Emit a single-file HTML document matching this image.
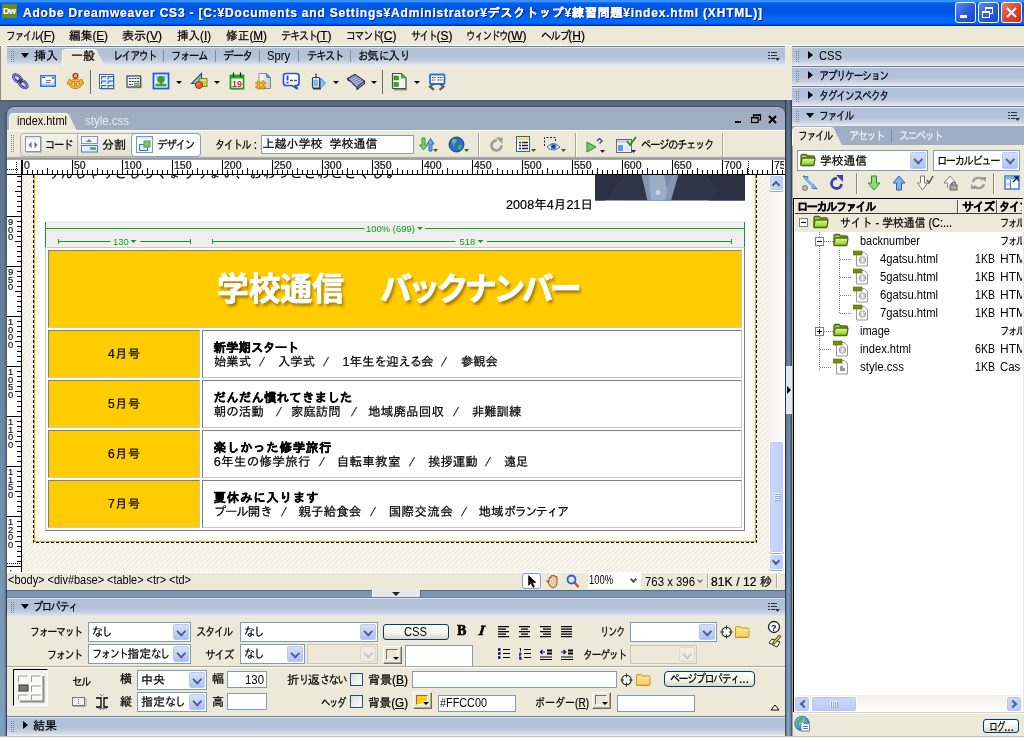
<!DOCTYPE html>
<html lang="ja"><head><meta charset="utf-8"><title>Adobe Dreamweaver CS3</title>
<style>
*{box-sizing:border-box;margin:0;padding:0}
html,body{width:1024px;height:738px;overflow:hidden;background:#ece9d8}
body{position:relative;will-change:transform;-webkit-text-stroke-width:0.22px;font-family:"Liberation Sans","IPAGothic",sans-serif;font-size:12px;color:#000;line-height:1}
.a{position:absolute}
.t{position:absolute;white-space:pre;line-height:14px;height:14px}
.k{letter-spacing:-3.5px}
.k3{letter-spacing:-3px}
.k2{letter-spacing:-2px}
.k1{letter-spacing:-1px}
u{text-decoration:underline}
#title{left:0;top:0;width:1024px;height:26px;background:linear-gradient(to bottom,#3a92ff 0,#3a92ff 1.800px,#0a6ef8 2.600px,#0059e3 4.500px,#0055e0 12px,#005aea 14px,#0064f6 17px,#0068fc 19px,#0068fa 23px,#0458e6 24px,#0034c4 25px,#002cb8 26px)}
#title .txt{left:23px;top:5px;color:#fff;font-weight:bold;font-size:13px;line-height:16px;height:16px;letter-spacing:0.25px;text-shadow:1px 1px 0 #0a1883}
.wb{position:absolute;top:2px;width:21px;height:21px;border:1px solid #fff;border-radius:3px;background:linear-gradient(135deg,#5b8df0 0%,#2a5ce0 50%,#1c45c8 100%)}
#menu{left:0;top:26px;width:1024px;height:19px;background:#ece9d8}
.ph{position:absolute;height:20px;background:linear-gradient(to bottom,#6f7f95 0,#6f7f95 1px,#dfe6ef 1px,#dfe6ef 2px,#b1c1d9 2px,#b2c2d9 11px,#c3cfe0 15px,#d3dce8 17.500px,#e2e8ef 19px,#eef1f5 20px)}
.ph .t{top:3px}
.grip{position:absolute;width:4px;height:12px;top:5px;background-image:radial-gradient(circle at 0.5px 0.5px,#75849a 0.65px,transparent 0.75px);background-size:2px 2px}
.tri-d{position:absolute;width:0;height:0;border-left:4.500px solid transparent;border-right:4.500px solid transparent;border-top:5.500px solid #000}
.tri-r{position:absolute;width:0;height:0;border-top:4.500px solid transparent;border-bottom:4.500px solid transparent;border-left:5.500px solid #000}
.pm{position:absolute;width:12px;height:9px}
.sep{position:absolute;width:1px;background:#8a8a8a}
.dd{position:absolute;width:0;height:0;border-left:3px solid transparent;border-right:3px solid transparent;border-top:3px solid #000}
.ic{position:absolute;width:16px;height:16px}
.sel{position:absolute;background:#fff;border:1px solid #7f9db9;height:20px}
.sel .btn{position:absolute;right:1px;top:1px;bottom:1px;width:16px;border-radius:2px;background:linear-gradient(to bottom,#d6e0fb,#b6c8f4 80%,#a9bdf0);border:1px solid #b9c9f0}
.sel .btn:after{content:"";position:absolute;left:3.500px;top:3px;width:4.500px;height:4.500px;border-right:2px solid #4d6185;border-bottom:2px solid #4d6185;transform:rotate(45deg)}
.sel.dis{background:#ece9d8;border-color:#c9c7ba}
.sel.dis .btn{background:#eeede5;border-color:#dcdacb}
.sel.dis .btn:after{border-color:#c9c7ba}
.sel .t{left:4px;top:2px}
.inp{position:absolute;background:#fff;border:1px solid #7f9db9}
.cb{position:absolute;width:13px;height:13px;border:1px solid #1c5180;background:linear-gradient(135deg,#dcdcd7,#fff)}
.btnx{position:absolute;border:1px solid #003c74;border-radius:3px;background:linear-gradient(to bottom,#fff,#f3f2ea 60%,#d9d6c8);text-align:center}
.sw{position:absolute;width:19px;height:18px;border:1px solid;border-color:#fff #716f64 #716f64 #fff;background:#ece9d8;box-shadow:inset -1px -1px 0 #aca899}
.sw i{position:absolute;left:2px;top:2px;right:3px;bottom:3px;border:1px solid;border-color:#716f64 #fff #fff #716f64;background:#ece9d8}
.sw b{position:absolute;right:2px;bottom:2px;width:7px;height:5px;background:#ece9d8}
.sw b:after{content:"";position:absolute;right:0;bottom:1px;border-left:3px solid transparent;border-right:3px solid transparent;border-top:3px solid #000}
</style></head><body>

<div id="title" class="a">
 <div class="a" style="left:2px;top:4px;width:15px;height:14px;background:#6b8b1c;color:#fff;font-size:9px;line-height:15px;font-weight:bold;letter-spacing:-0.5px;padding-left:1px">Dw</div>
<div class="t" style="left:23px;top:5px;font-weight:bold;color:#fff;line-height:16px;height:16px;letter-spacing:0.81px;text-shadow:1px 1px 0 #0a1883">Adobe Dreamweaver CS3 - [C:¥Documents and Settings¥Administrator¥デスクトップ¥練習問題¥index.html (XHTML)]</div>

 <div class="wb" style="left:955px"><div class="a" style="left:4px;top:12px;width:7px;height:3px;background:#fff"></div></div>
 <div class="wb" style="left:978px"><div class="a" style="left:6px;top:4px;width:8px;height:7px;border:1px solid #fff;border-top-width:2px"></div><div class="a" style="left:3px;top:8px;width:8px;height:7px;border:1px solid #fff;border-top-width:2px;background:#2d5fe0"></div></div>
 <div class="wb" style="left:1001px;background:linear-gradient(135deg,#e8826a 0%,#d9492a 50%,#c0341a 100%)"><svg class="a" style="left:3px;top:3px" width="13" height="13"><path d="M2 2L11 11M11 2L2 11" stroke="#fff" stroke-width="2.2" fill="none"/></svg></div>
</div>
<div id="menu" class="a">
<div class="t" style="left:6px;top:3px;"><span style="display:inline-block;width:33.67px;vertical-align:top"><span style="display:inline-block;transform:scaleX(0.821);transform-origin:0 50%;letter-spacing:-1.75px">ファイル</span></span>(<u>F</u>)</div>
<div class="t" style="left:69px;top:3px;transform:scaleX(0.9750);transform-origin:0 50%;">編集(<u>E</u>)</div>
<div class="t" style="left:122px;top:3px;letter-spacing:0.00px;">表示(<u>V</u>)</div>
<div class="t" style="left:177px;top:3px;transform:scaleX(0.9624);transform-origin:0 50%;">挿入(<u>I</u>)</div>
<div class="t" style="left:226px;top:3px;transform:scaleX(0.9762);transform-origin:0 50%;">修正(<u>M</u>)</div>
<div class="t" style="left:280.5px;top:3px;"><span style="display:inline-block;width:35.67px;vertical-align:top"><span style="display:inline-block;transform:scaleX(0.863);transform-origin:0 50%;letter-spacing:-1.67px">テキスト</span></span>(<u>T</u>)</div>
<div class="t" style="left:345.5px;top:3px;"><span style="display:inline-block;width:34.33px;vertical-align:top"><span style="display:inline-block;transform:scaleX(0.835);transform-origin:0 50%;letter-spacing:-1.72px">コマンド</span></span>(<u>C</u>)</div>
<div class="t" style="left:411px;top:3px;"><span style="display:inline-block;width:25.50px;vertical-align:top"><span style="display:inline-block;transform:scaleX(0.828);transform-origin:0 50%;letter-spacing:-1.74px">サイト</span></span>(<u>S</u>)</div>
<div class="t" style="left:466px;top:3px;"><span style="display:inline-block;width:41.17px;vertical-align:top"><span style="display:inline-block;transform:scaleX(0.806);transform-origin:0 50%;letter-spacing:-1.79px">ウィンドウ</span></span>(<u>W</u>)</div>
<div class="t" style="left:540.5px;top:3px;"><span style="display:inline-block;width:27.83px;vertical-align:top"><span style="display:inline-block;transform:scaleX(0.893);transform-origin:0 50%;letter-spacing:-1.61px">ヘルプ</span></span>(<u>H</u>)</div>
</div>
<div class="a" style="left:0;top:45px;width:1024px;height:1px;background:#fff"></div>
<div class="a" style="left:0;top:46px;width:1px;height:54px;background:#8d8d84"></div>

<div class="ph" style="left:7px;top:46px;width:778px"></div>
<div class="grip" style="left:11px;top:51px"></div>
<div class="tri-d" style="left:21px;top:53px"></div>
<div class="t" style="left:34px;top:49px">挿入</div>
<svg class="a" style="left:62px;top:48px" width="46" height="18"><path d="M0 18V5Q0 1 4 1H31Q34 1 35.5 4L43 18Z" fill="#ece9d8"/><path d="M0.5 18V5Q0.5 1.5 4 1.5H31Q34 1.5 35.5 4" fill="none" stroke="#f8f8f4" stroke-width="1"/></svg>
<div class="t" style="left:71px;top:49px">一般</div>
<div class="t" style="left:112.5px;top:49px;"><span style="display:inline-block;width:43.00px;vertical-align:top"><span style="display:inline-block;transform:scaleX(0.837);transform-origin:0 50%;letter-spacing:-1.72px">レイアウト</span></span></div>

<div class="sep" style="left:163px;top:50px;height:12px;background:#7d8ca3"></div>
<div class="t" style="left:171px;top:49px;"><span style="display:inline-block;width:36.00px;vertical-align:top"><span style="display:inline-block;transform:scaleX(0.870);transform-origin:0 50%;letter-spacing:-1.66px">フォーム</span></span></div>

<div class="sep" style="left:215px;top:50px;height:12px;background:#7d8ca3"></div>
<div class="t" style="left:223px;top:49px;"><span style="display:inline-block;width:29.00px;vertical-align:top"><span style="display:inline-block;transform:scaleX(0.926);transform-origin:0 50%;letter-spacing:-1.56px">データ</span></span></div>

<div class="sep" style="left:259px;top:50px;height:12px;background:#7d8ca3"></div>
<div class="t" style="left:267px;top:49px;-webkit-text-stroke-width:0;transform:scaleX(0.9316);transform-origin:0 50%;">Spry</div>

<div class="sep" style="left:298px;top:50px;height:12px;background:#7d8ca3"></div>
<div class="t" style="left:306.5px;top:49px;"><span style="display:inline-block;width:36.00px;vertical-align:top"><span style="display:inline-block;transform:scaleX(0.870);transform-origin:0 50%;letter-spacing:-1.66px">テキスト</span></span></div>

<div class="sep" style="left:350px;top:50px;height:12px;background:#7d8ca3"></div>
<div class="t" style="left:358px;top:49px;"><span style="display:inline-block;width:9.00px;vertical-align:top"><span style="display:inline-block;transform:scaleX(0.870);transform-origin:0 50%;letter-spacing:-1.66px">お</span></span>気<span style="display:inline-block;width:9.00px;vertical-align:top"><span style="display:inline-block;transform:scaleX(0.870);transform-origin:0 50%;letter-spacing:-1.66px">に</span></span>入<span style="display:inline-block;width:9.00px;vertical-align:top"><span style="display:inline-block;transform:scaleX(0.870);transform-origin:0 50%;letter-spacing:-1.66px">り</span></span></div>

<svg class="a" style="left:768px;top:51px" width="12" height="10"><path d="M0 1.5h2M3 1.5h6M0 4.5h2M3 4.5h6M0 7.5h2M3 7.5h4" stroke="#333" stroke-width="1"/><path d="M7 7h5l-2.5 3z" fill="#333"/></svg>
<!-- insert toolbar icons -->
<svg class="a" style="left:12px;top:73px" width="17" height="17" viewBox="0 0 17 17"><path d="M1 2L15.500 15" stroke="#c8ccf4" stroke-width="1.200"/><g fill="none"><ellipse cx="5.500" cy="5.500" rx="5" ry="2.800" transform="rotate(42 5.500 5.500)" stroke="#23237a" stroke-width="2.600"/><ellipse cx="5.500" cy="5.500" rx="5" ry="2.800" transform="rotate(42 5.500 5.500)" stroke="#8f93f2" stroke-width="1.200"/><ellipse cx="11" cy="11" rx="5" ry="2.800" transform="rotate(42 11 11)" stroke="#23237a" stroke-width="2.600"/><ellipse cx="11" cy="11" rx="5" ry="2.800" transform="rotate(42 11 11)" stroke="#8f93f2" stroke-width="1.200"/></g><rect x="6.500" y="6.500" width="3.500" height="3.500" fill="#444" transform="rotate(45 8.250 8.250)"/></svg>
<svg class="a" style="left:40px;top:75px" width="17" height="13"><defs><linearGradient id="gm" x1="0" y1="0" x2="0" y2="1"><stop offset="0" stop-color="#fff"/><stop offset=".5" stop-color="#f4f9ff"/><stop offset="1" stop-color="#a8ccf8"/></linearGradient></defs><rect x=".75" y=".75" width="14.500" height="10.500" fill="url(#gm)" stroke="#2a7ae8" stroke-width="1.500"/><path d="M6 5.500h5M6 7.500h4" stroke="#778" stroke-width="1"/><path d="M2 2.500h3" stroke="#446"/><rect x="12" y="2" width="2" height="2" fill="#f0582a"/></svg>
<svg class="a" style="left:67px;top:72px" width="18" height="18" viewBox="0 0 18 18"><g stroke="#b4680e" stroke-width="2.800" fill="none" stroke-linejoin="round"><path d="M8.500 6V15M5.500 8.500h6"/><path d="M2.500 10.500Q3.500 15.500 8.500 15.500Q13.500 15.500 14.500 10.500"/><path d="M1.500 11l1.200-2.500 2 2.200zM15.500 11l-1.200-2.500-2 2.200z"/></g><g stroke="#f4bc1e" stroke-width="1.400" fill="none"><path d="M8.500 6V15M5.500 8.500h6"/><path d="M2.500 10.500Q3.500 15.500 8.500 15.500Q13.500 15.500 14.500 10.500"/><path d="M1.500 11l1.200-2.500 2 2.200zM15.500 11l-1.200-2.500-2 2.200z" fill="#f4bc1e"/></g><circle cx="8.500" cy="3.800" r="2.300" fill="#fff" stroke="#a8401a" stroke-width="1.600"/><circle cx="8.500" cy="3.800" r=".9" fill="#d86a2a"/></svg>
<div class="sep" style="left:90px;top:70px;height:24px;background:#6e6e66"></div>
<svg class="a" style="left:98px;top:73px" width="18" height="18"><rect x="3" y="3" width="14" height="14" fill="#a9acb4" opacity=".6"/><rect x="1.500" y="1.500" width="14" height="14" fill="#fff" stroke="#3a64ae" stroke-width="1"/><g fill="#c4d8f4"><rect x="3" y="3" width="5" height="3"/><rect x="9.500" y="3" width="5" height="3"/><rect x="3" y="7.500" width="5" height="3"/><rect x="9.500" y="7.500" width="5" height="3"/><rect x="3" y="12" width="5" height="2.500"/><rect x="9.500" y="12" width="5" height="2.500"/></g><path d="M3.500 6.500v-3h5M10 6.500v-3h5M3.500 11v-3h5M10 11v-3h5M3.500 15v-2.500h5M10 15v-2.500h5" fill="none" stroke="#2f5cb4" stroke-width="1"/></svg>
<svg class="a" style="left:126px;top:75px" width="17" height="14"><rect x="2" y="2" width="14" height="11.500" fill="#9a9a9a" opacity=".5"/><rect x="1" y="1" width="13.500" height="11" fill="#eef4fc" stroke="#4a4e58" stroke-width="1.300"/><path d="M3 3.500h10M3 6.500h10M3 9.500h4" stroke="#27348c" stroke-width="1.200" stroke-dasharray="2 .7"/><rect x="8.500" y="8" width="4.500" height="3" fill="#8ec43a" stroke="#5f8f1a" stroke-width=".5"/></svg>
<svg class="a" style="left:152px;top:72px" width="18" height="18"><defs><linearGradient id="gs" x1="0" y1="0" x2="0" y2="1"><stop offset="0" stop-color="#9cc8f6"/><stop offset=".7" stop-color="#fff"/></linearGradient></defs><rect x="1.500" y="1.500" width="15" height="15" fill="#fff" stroke="#1a5ae8" stroke-width="1.800"/><rect x="3.500" y="3.500" width="11" height="11" fill="url(#gs)"/><rect x="3.500" y="11.500" width="11" height="3" fill="#3aaa34"/><ellipse cx="9" cy="7.500" rx="3.800" ry="3.400" fill="#3d9c35"/><rect x="8.500" y="10" width="1.200" height="2.500" fill="#a0333a"/></svg>
<div class="dd" style="left:176px;top:81px"></div>
<svg class="a" style="left:190px;top:72px" width="19" height="18"><path d="M1.500 11.500L11.500 1.500V11.500Z" fill="#86d4c0" stroke="#2a5090" stroke-width="1.200"/><rect x="9" y="6.500" width="8" height="8" fill="#c9d23e" stroke="#7a8a20"/><rect x="10" y="7.500" width="6" height="1.500" fill="#e4ea8a"/><circle cx="9" cy="13" r="3.600" fill="#e4573a" stroke="#a8341c"/><circle cx="8.300" cy="12.300" r="1.400" fill="#f08a70"/></svg>
<div class="dd" style="left:214px;top:81px"></div>
<svg class="a" style="left:229px;top:72px" width="17" height="18"><rect x="1.500" y="3.500" width="13" height="13" fill="#fff" stroke="#18a818" stroke-width="1.800"/><rect x="1" y="3" width="14" height="3.500" fill="#18a818"/><rect x="3" y="17" width="12" height="1" fill="#9a9a9a"/><path d="M4.500 .5v4.500M11.500 .5v4.500" stroke="#222" stroke-width="1.300"/><text x="3" y="15" font-family="Liberation Sans,sans-serif" font-size="9.500" font-weight="bold" fill="#d81838" textLength="10" lengthAdjust="spacingAndGlyphs">19</text></svg>
<svg class="a" style="left:255px;top:72px" width="18" height="19"><defs><linearGradient id="gp" x1="0" y1="0" x2="1" y2="0"><stop offset="0" stop-color="#fff"/><stop offset="1" stop-color="#c8c8cc"/></linearGradient></defs><path d="M4 1.500h7.500l4 4v11h-11.500z" fill="url(#gp)" stroke="#8a8a92"/><path d="M11.500 1.500v4h4z" fill="#5a9af0" stroke="#3a6ac8" stroke-width=".6"/><path d="M3.500 8.500v9M8 8.500v9M.5 11h10.500M.5 15h10.500" stroke="#c47a0e" stroke-width="2.400"/><path d="M3.500 8.500v9M8 8.500v9M.5 11h10.500M.5 15h10.500" stroke="#f4b428" stroke-width="1.200"/></svg>
<svg class="a" style="left:282px;top:72px" width="19" height="18"><path d="M4 1.500h10.500q2.500 0 2.500 2.500v7q0 2.500-2.500 2.500h-1l2 3.500-5.500-3.500h-6q-2.500 0-2.500-2.500v-7q0-2.500 2.500-2.500z" fill="#fff" stroke="#2a52c8" stroke-width="1.700"/><path d="M5.500 3.500v5M5.500 9.800v1.700" stroke="#2a52c8" stroke-width="2"/><path d="M8 8.500h3M12 8.500h3" stroke="#2a52c8" stroke-width="1.600"/></svg>
<svg class="a" style="left:311px;top:73px" width="16" height="17"><rect x="2" y="15" width="8" height="1.500" fill="#333"/><rect x="1.500" y="4.500" width="7" height="10.500" rx="1" fill="#f4f8fc" stroke="#3a3e48" stroke-width="1.200"/><rect x="3" y="7" width="3.500" height="6" fill="#7cc4f4" stroke="#4a8ad0" stroke-width=".5"/><path d="M5 .5v5" stroke="#333" stroke-width="1.200"/><path d="M9.500 5l5 5-5 5z" fill="#86c0f2" stroke="#3a78c8" stroke-width=".9"/></svg>
<div class="dd" style="left:333px;top:81px"></div>
<svg class="a" style="left:346px;top:73px" width="20" height="17"><path d="M1.500 5.500L9 1.500L18.500 8L11 14.500Z" fill="#b4b8e4" stroke="#2a2e48" stroke-width="1.100"/><path d="M4 6l7-3.500M5.800 7.500l7-3.500M7.600 9l7-3.500M9.400 10.500l7-3.500M11 12l6-3" stroke="#6a70b0" stroke-width=".9"/><path d="M1.500 5.500q.5 3 2.500 2M18.500 8v2.500l-7.500 6v-2" fill="none" stroke="#2a2e48" stroke-width="1.100"/></svg>
<div class="dd" style="left:371px;top:81px"></div>
<div class="sep" style="left:382px;top:70px;height:24px;background:#6e6e66"></div>
<svg class="a" style="left:391px;top:72px" width="17" height="19"><rect x="3" y="17" width="13" height="1.500" fill="#8a8a8a"/><path d="M1.500 1.500h9l4.500 4.500v10.500h-13.500z" fill="#f4f4f0" stroke="#4a4a4a" stroke-width="1.200"/><path d="M10.500 1.500v4.500h4.500z" fill="#4ab83e" stroke="#2d8a2a" stroke-width=".7"/><rect x="3" y="4" width="4.500" height="4" fill="#2fa52a" stroke="#1a7a1a" stroke-width=".5"/><rect x="3" y="10.500" width="4.500" height="4" fill="#2fa52a" stroke="#1a7a1a" stroke-width=".5"/></svg>
<div class="dd" style="left:414px;top:81px"></div>
<svg class="a" style="left:428px;top:73px" width="18" height="18"><rect x="2" y="1.500" width="14.500" height="9.500" rx="1" fill="#f6faff" stroke="#2a6af0" stroke-width="1.800"/><path d="M4 4.500h4M9.500 4.500h5M9.500 7h5M4 7h3" stroke="#444" stroke-width="1" stroke-dasharray="1.500 .5"/><path d="M6 10.500l-4 3.200 4 3.200M11.500 10.500l4 3.200-4 3.200" fill="none" stroke="#585c64" stroke-width="2.200"/></svg>
<div class="a" style="left:0;top:100px;width:793px;height:638px;background:linear-gradient(to bottom,#5a6f87,#81a1c0)"></div><div class="a" style="left:0;top:112px;width:7px;height:626px;background:linear-gradient(to right,rgba(0,0,0,0) 0,rgba(0,0,0,0) 3.500px,rgba(20,30,45,.28) 6px,rgba(20,30,45,.7) 6.200px,rgba(20,30,45,.7) 7px)"></div><div class="a" style="left:0;top:100px;width:786px;height:1.500px;background:#4f6278"></div><div class="a" style="left:7px;top:590px;width:779px;height:1px;background:rgba(20,30,50,.35)"></div><div class="a" style="left:6px;top:106px;width:780px;height:484px;background:#9eadc2;border-radius:8px 8px 0 0;border:1px solid #3a4855;border-bottom:none;border-left-color:#4c5f75;border-right-color:#4c5f75"></div><div class="a" style="left:13px;top:107px;width:766px;height:1px;background:#aab7c9"></div><svg class="a" style="left:9px;top:112px" width="72" height="19"><path d="M0 19V6Q0 1 5 1H56Q59 1 60.5 4L68 19Z" fill="#ece9d8"/><path d="M0.5 19V6Q0.5 1.5 5 1.500H56Q59 1.500 60.500 4" fill="none" stroke="#fbfbf8"/></svg><div class="t" style="left:17px;top:114px;-webkit-text-stroke-width:0;transform:scaleX(0.9140);transform-origin:0 50%;">index.html</div>
<div class="t" style="left:85px;top:114px;color:#e6ebf2;-webkit-text-stroke-width:0;transform:scaleX(0.9562);transform-origin:0 50%;">style.css</div>
<div class="a" style="left:735px;top:121px;width:6px;height:2px;background:#000"></div><svg class="a" style="left:751px;top:114px" width="11" height="10"><path d="M2.5 3V1h7v5h-2" fill="none" stroke="#000" stroke-width="1.200"/><rect x=".5" y="3.500" width="6.500" height="5" fill="none" stroke="#000" stroke-width="1.200"/><path d="M2 1.200h8M0 3.800h7.500" stroke="#000" stroke-width="1.500"/></svg><svg class="a" style="left:768px;top:114.500px" width="10" height="9"><path d="M1 1l7 7M8 1l-7 7" stroke="#000" stroke-width="2"/></svg><div class="a" style="left:7px;top:130px;width:778px;height:29px;background:linear-gradient(to bottom,#fbfbf8 0,#fbfbf8 1px,#ece9d8 1px,#ece9d8 26px,#c9c6b6 27px,#a6a393 28px,#8f8c7e 29px)"></div><div class="grip" style="left:11px;top:135px;height:18px"></div><div class="a" style="left:20px;top:133px;width:181px;height:24px;border:1px solid #b5b2a2;border-radius:4px;background:linear-gradient(to bottom,#f4f3ec,#e4e1d2)"></div><div class="a" style="left:77px;top:134px;width:1px;height:22px;background:#b5b2a2"></div><div class="a" style="left:131px;top:133px;width:70px;height:24px;border:1px solid #7d9fd0;border-radius:4px;background:#fff"></div><svg class="a" style="left:25px;top:136px" width="17" height="17"><rect x=".5" y=".5" width="15" height="15" fill="#fcfcfc" stroke="#8894a8"/><rect x="1" y="1" width="14" height="2" fill="#e3e7ee"/><path d="M6.500 5.500l-3 3.500 3 3.500zM9.500 5.500l3 3.500-3 3.500z" fill="#5f6f88"/><path d="M1 16.500h15.500V1" stroke="#b8bcc4" fill="none"/></svg><div class="t" style="left:45px;top:138px;"><span style="display:inline-block;width:27.00px;vertical-align:top"><span style="display:inline-block;transform:scaleX(0.870);transform-origin:0 50%;letter-spacing:-1.66px">コード</span></span></div>
<svg class="a" style="left:81px;top:136px" width="18" height="17"><rect x=".5" y=".5" width="16" height="7" fill="#f4f4f4" stroke="#8894a8"/><path d="M5 6l3-3 3 3z" fill="#6f7d92"/><rect x=".5" y="9.500" width="16" height="6.500" fill="#e6f0fb" stroke="#3d7bd6"/><rect x="9" y="11" width="6" height="3" fill="#5cb85c"/></svg><div class="t" style="left:102px;top:138px;letter-spacing:0.00px;">分割</div>
<svg class="a" style="left:136px;top:136px" width="18" height="18"><rect x=".5" y=".5" width="16" height="16" fill="#fdfdfd" stroke="#6f9ad8"/><rect x="1" y="1" width="15" height="2" fill="#dfe8f6"/><rect x="3.500" y="8.500" width="8" height="6" fill="#dbe8fa" stroke="#3d7bd6"/><rect x="8" y="5" width="6" height="6" fill="#86c866" stroke="#4c9a3c"/></svg><div class="t" style="left:157px;top:138px;"><span style="display:inline-block;width:37.00px;vertical-align:top"><span style="display:inline-block;transform:scaleX(0.891);transform-origin:0 50%;letter-spacing:-1.62px">デザイン</span></span></div>
<div class="t" style="left:215px;top:138px;"><span style="display:inline-block;width:35.33px;vertical-align:top"><span style="display:inline-block;transform:scaleX(0.856);transform-origin:0 50%;letter-spacing:-1.68px">タイトル</span></span> :</div>
<div class="inp" style="left:261px;top:135px;width:153px;height:18.500px"></div><div class="t" style="left:262.5px;top:136.5px;letter-spacing:0.03px;">上越小学校  学校通信</div>
<svg class="a" style="left:419px;top:137px" width="20" height="16"><path d="M3 1h3v7h2.500l-4 5-4-5H3z" fill="#7bd26a" stroke="#2d8a2a" stroke-width=".9"/><path d="M10 14V7H8l3.500-5.500L15 7h-2v7z" fill="#6aa6ea" stroke="#2d5fb0" stroke-width=".9"/><path d="M14 12h5l-2.500 3z" fill="#3c5a1c"/></svg><svg class="a" style="left:448px;top:136px" width="22" height="18"><circle cx="8.500" cy="8.500" r="7.500" fill="#2c68d8" stroke="#1c3f8f"/><path d="M4 4q3-2 5 0 1 2-1 3-2 1-2 3-3-1-2-6zM10 9q3-1 4 1-1 4-3 4-2-2-1-5z" fill="#4cae3c"/><circle cx="6" cy="5" r="2" fill="#8fb6f2" opacity=".6"/><path d="M16 13h5l-2.500 3z" fill="#3c5a1c"/></svg><div class="a" style="left:478px;top:133px;width:2px;height:24px;background:linear-gradient(to right,#a6a393 50%,#fbfbf8 50%)"></div><svg class="a" style="left:489px;top:137px" width="16" height="16"><path d="M12.500 8.500A5 5 0 1 1 8 3.500" fill="none" stroke="#9a9a9a" stroke-width="2.600"/><path d="M7 0.500h6.500V7z" fill="#9a9a9a"/></svg><svg class="a" style="left:516px;top:136px" width="20" height="18"><rect x=".5" y=".5" width="13" height="15" fill="#fffef0" stroke="#2f6f7f"/><rect x="1" y="1" width="12" height="3" fill="#f0e08a"/><path d="M3 6.500h2M6 6.500h6M3 9.500h2M6 9.500h6M3 12.500h2M6 12.500h6" stroke="#223" stroke-width="1.300"/><path d="M15 13h5l-2.500 3z" fill="#3c5a1c"/></svg><svg class="a" style="left:543px;top:136px" width="24" height="18"><path d="M1.500 10V1.500h11V5" fill="none" stroke="#223" stroke-dasharray="2 1.500"/><path d="M4 11q6-7 13 0-7 6-13 0z" fill="#f4f8ff" stroke="#667"/><circle cx="10.500" cy="10.500" r="3" fill="#3d7be0"/><circle cx="10.500" cy="10.500" r="1.200" fill="#123"/><path d="M18 13h5l-2.500 3z" fill="#3c5a1c"/></svg><div class="a" style="left:575px;top:133px;width:2px;height:24px;background:linear-gradient(to right,#a6a393 50%,#fbfbf8 50%)"></div><svg class="a" style="left:586px;top:137px" width="22" height="18"><path d="M1 5l9 5-9 5z" fill="#6fc96a" stroke="#2d8a2a"/><path d="M11 4l2.500-2.500M13.500 6.500L16 4l-2.500-2.500" stroke="#445a88" stroke-width="1.500" fill="none"/><path d="M14 13h5l-2.500 3z" fill="#223"/></svg><svg class="a" style="left:616px;top:136px" width="22" height="19"><rect x=".5" y="3.500" width="15" height="13" fill="#eef3fa" stroke="#667"/><rect x="1" y="4" width="14" height="3" fill="#c9d3e3"/><rect x="2" y="9" width="5" height="6" fill="#5c9be8"/><rect x="8" y="9" width="6" height="6" fill="#dfe6f2"/><path d="M11 5l3 4 6-8" fill="none" stroke="#2d8a2a" stroke-width="1.800"/><path d="M15 14h5l-2.500 3z" fill="#223"/></svg><div class="t" style="left:641px;top:138px;"><span style="display:inline-block;width:72.00px;vertical-align:top"><span style="display:inline-block;transform:scaleX(0.870);transform-origin:0 50%;letter-spacing:-1.66px">ページのチェック</span></span></div>
<div class="a" style="left:722px;top:133px;width:2px;height:24px;background:linear-gradient(to right,#a6a393 50%,#fbfbf8 50%)"></div><div class="a" style="left:7px;top:160px;width:778px;height:15px;background:#fff"></div><div class="a" style="left:7px;top:174px;width:778px;height:1px;background:#000"></div><svg class="a" style="left:7px;top:160px" width="778" height="15"><path d="M15.5 15v-15M20.5 15v-5M25.5 15v-5M30.5 15v-5M35.5 15v-5M40.5 15v-7M45.5 15v-5M50.5 15v-5M55.5 15v-5M60.5 15v-5M65.5 15v-15M70.5 15v-5M75.5 15v-5M80.5 15v-5M85.5 15v-5M90.5 15v-7M95.5 15v-5M100.5 15v-5M105.5 15v-5M110.5 15v-5M115.5 15v-15M120.5 15v-5M125.5 15v-5M130.5 15v-5M135.5 15v-5M140.5 15v-7M145.5 15v-5M150.5 15v-5M155.5 15v-5M160.5 15v-5M165.5 15v-15M170.5 15v-5M175.5 15v-5M180.5 15v-5M185.5 15v-5M190.5 15v-7M195.5 15v-5M200.5 15v-5M205.5 15v-5M210.5 15v-5M215.5 15v-15M220.5 15v-5M225.5 15v-5M230.5 15v-5M235.5 15v-5M240.5 15v-7M245.5 15v-5M250.5 15v-5M255.5 15v-5M260.5 15v-5M265.5 15v-15M270.5 15v-5M275.5 15v-5M280.5 15v-5M285.5 15v-5M290.5 15v-7M295.5 15v-5M300.5 15v-5M305.5 15v-5M310.5 15v-5M315.5 15v-15M320.5 15v-5M325.5 15v-5M330.5 15v-5M335.5 15v-5M340.5 15v-7M345.5 15v-5M350.5 15v-5M355.5 15v-5M360.5 15v-5M365.5 15v-15M370.5 15v-5M375.5 15v-5M380.5 15v-5M385.5 15v-5M390.5 15v-7M395.5 15v-5M400.5 15v-5M405.5 15v-5M410.5 15v-5M415.5 15v-15M420.5 15v-5M425.5 15v-5M430.5 15v-5M435.5 15v-5M440.5 15v-7M445.5 15v-5M450.5 15v-5M455.5 15v-5M460.5 15v-5M465.5 15v-15M470.5 15v-5M475.5 15v-5M480.5 15v-5M485.5 15v-5M490.5 15v-7M495.5 15v-5M500.5 15v-5M505.5 15v-5M510.5 15v-5M515.5 15v-15M520.5 15v-5M525.5 15v-5M530.5 15v-5M535.5 15v-5M540.5 15v-7M545.5 15v-5M550.5 15v-5M555.5 15v-5M560.5 15v-5M565.5 15v-15M570.5 15v-5M575.5 15v-5M580.5 15v-5M585.5 15v-5M590.5 15v-7M595.5 15v-5M600.5 15v-5M605.5 15v-5M610.5 15v-5M615.5 15v-15M620.5 15v-5M625.5 15v-5M630.5 15v-5M635.5 15v-5M640.5 15v-7M645.5 15v-5M650.5 15v-5M655.5 15v-5M660.5 15v-5M665.5 15v-15M670.5 15v-5M675.5 15v-5M680.5 15v-5M685.5 15v-5M690.5 15v-7M695.5 15v-5M700.5 15v-5M705.5 15v-5M710.5 15v-5M715.5 15v-15M720.5 15v-5M725.5 15v-5M730.5 15v-5M735.5 15v-5M740.5 15v-7M745.5 15v-5M750.5 15v-5M755.5 15v-5M760.5 15v-5M765.5 15v-15M770.5 15v-5M775.5 15v-5" stroke="#000" stroke-width="1" fill="none"/><rect x="14" y="0" width="1.500" height="15" fill="#000"/><path d="M0 9.500h12M9.500 2v12M741.500 1v13" stroke="#000" stroke-dasharray="1 1" fill="none"/></svg><div class="t" style="left:24px;top:160px;font-size:10.500px;line-height:11px;height:11px;font-family:'Liberation Sans',sans-serif;color:#111;overflow:hidden;max-width:760px">0</div><div class="t" style="left:74px;top:160px;font-size:10.500px;line-height:11px;height:11px;font-family:'Liberation Sans',sans-serif;color:#111;overflow:hidden;max-width:710px">50</div><div class="t" style="left:124px;top:160px;font-size:10.500px;line-height:11px;height:11px;font-family:'Liberation Sans',sans-serif;color:#111;overflow:hidden;max-width:660px">100</div><div class="t" style="left:174px;top:160px;font-size:10.500px;line-height:11px;height:11px;font-family:'Liberation Sans',sans-serif;color:#111;overflow:hidden;max-width:610px">150</div><div class="t" style="left:224px;top:160px;font-size:10.500px;line-height:11px;height:11px;font-family:'Liberation Sans',sans-serif;color:#111;overflow:hidden;max-width:560px">200</div><div class="t" style="left:274px;top:160px;font-size:10.500px;line-height:11px;height:11px;font-family:'Liberation Sans',sans-serif;color:#111;overflow:hidden;max-width:510px">250</div><div class="t" style="left:324px;top:160px;font-size:10.500px;line-height:11px;height:11px;font-family:'Liberation Sans',sans-serif;color:#111;overflow:hidden;max-width:460px">300</div><div class="t" style="left:374px;top:160px;font-size:10.500px;line-height:11px;height:11px;font-family:'Liberation Sans',sans-serif;color:#111;overflow:hidden;max-width:410px">350</div><div class="t" style="left:424px;top:160px;font-size:10.500px;line-height:11px;height:11px;font-family:'Liberation Sans',sans-serif;color:#111;overflow:hidden;max-width:360px">400</div><div class="t" style="left:474px;top:160px;font-size:10.500px;line-height:11px;height:11px;font-family:'Liberation Sans',sans-serif;color:#111;overflow:hidden;max-width:310px">450</div><div class="t" style="left:524px;top:160px;font-size:10.500px;line-height:11px;height:11px;font-family:'Liberation Sans',sans-serif;color:#111;overflow:hidden;max-width:260px">500</div><div class="t" style="left:574px;top:160px;font-size:10.500px;line-height:11px;height:11px;font-family:'Liberation Sans',sans-serif;color:#111;overflow:hidden;max-width:210px">550</div><div class="t" style="left:624px;top:160px;font-size:10.500px;line-height:11px;height:11px;font-family:'Liberation Sans',sans-serif;color:#111;overflow:hidden;max-width:160px">600</div><div class="t" style="left:674px;top:160px;font-size:10.500px;line-height:11px;height:11px;font-family:'Liberation Sans',sans-serif;color:#111;overflow:hidden;max-width:110px">650</div><div class="t" style="left:724px;top:160px;font-size:10.500px;line-height:11px;height:11px;font-family:'Liberation Sans',sans-serif;color:#111;overflow:hidden;max-width:60px">700</div><div class="t" style="left:774px;top:160px;font-size:10.500px;line-height:11px;height:11px;font-family:'Liberation Sans',sans-serif;color:#111;overflow:hidden;max-width:10px">750</div><div class="a" style="left:7px;top:175px;width:14px;height:397px;background:#fff"></div><div class="a" style="left:21px;top:175px;width:1.500px;height:397px;background:#000"></div><svg class="a" style="left:7px;top:175px" width="15" height="397"><path d="M15 1.5h-5M15 6.5h-5M15 11.5h-5M15 16.5h-7M15 21.5h-5M15 26.5h-5M15 31.5h-5M15 36.5h-5M15 41.5h-15M15 46.5h-5M15 51.5h-5M15 56.5h-5M15 61.5h-5M15 66.5h-7M15 71.5h-5M15 76.5h-5M15 81.5h-5M15 86.5h-5M15 91.5h-15M15 96.5h-5M15 101.5h-5M15 106.5h-5M15 111.5h-5M15 116.5h-7M15 121.5h-5M15 126.5h-5M15 131.5h-5M15 136.5h-5M15 141.5h-15M15 146.5h-5M15 151.5h-5M15 156.5h-5M15 161.5h-5M15 166.5h-7M15 171.5h-5M15 176.5h-5M15 181.5h-5M15 186.5h-5M15 191.5h-15M15 196.5h-5M15 201.5h-5M15 206.5h-5M15 211.5h-5M15 216.5h-7M15 221.5h-5M15 226.5h-5M15 231.5h-5M15 236.5h-5M15 241.5h-15M15 246.5h-5M15 251.5h-5M15 256.5h-5M15 261.5h-5M15 266.5h-7M15 271.5h-5M15 276.5h-5M15 281.5h-5M15 286.5h-5M15 291.5h-15M15 296.5h-5M15 301.5h-5M15 306.5h-5M15 311.5h-5M15 316.5h-7M15 321.5h-5M15 326.5h-5M15 331.5h-5M15 336.5h-5M15 341.5h-15M15 346.5h-5M15 351.5h-5M15 356.5h-5M15 361.5h-5M15 366.5h-7M15 371.5h-5M15 376.5h-5M15 381.5h-5M15 386.5h-5" stroke="#000" stroke-width="1" fill="none"/><path d="M0 388.500h14" stroke="#000" stroke-dasharray="1 1"/><rect x="0" y="391" width="15" height="1" fill="#000"/><rect x="3" y="395" width="1.500" height="1.500" fill="#c8402a"/></svg><div class="t" style="left:8px;top:218.0px;font-size:11px;line-height:9px;height:9px;font-family:'Liberation Sans',sans-serif;color:#111;transform:scale(.85,.9);transform-origin:0 0">9</div><div class="t" style="left:8px;top:225.6px;font-size:11px;line-height:9px;height:9px;font-family:'Liberation Sans',sans-serif;color:#111;transform:scale(.85,.9);transform-origin:0 0">0</div><div class="t" style="left:8px;top:233.2px;font-size:11px;line-height:9px;height:9px;font-family:'Liberation Sans',sans-serif;color:#111;transform:scale(.85,.9);transform-origin:0 0">0</div><div class="t" style="left:8px;top:268.0px;font-size:11px;line-height:9px;height:9px;font-family:'Liberation Sans',sans-serif;color:#111;transform:scale(.85,.9);transform-origin:0 0">9</div><div class="t" style="left:8px;top:275.6px;font-size:11px;line-height:9px;height:9px;font-family:'Liberation Sans',sans-serif;color:#111;transform:scale(.85,.9);transform-origin:0 0">5</div><div class="t" style="left:8px;top:283.2px;font-size:11px;line-height:9px;height:9px;font-family:'Liberation Sans',sans-serif;color:#111;transform:scale(.85,.9);transform-origin:0 0">0</div><div class="t" style="left:8px;top:318.0px;font-size:11px;line-height:9px;height:9px;font-family:'Liberation Sans',sans-serif;color:#111;transform:scale(.85,.9);transform-origin:0 0">1</div><div class="t" style="left:8px;top:325.6px;font-size:11px;line-height:9px;height:9px;font-family:'Liberation Sans',sans-serif;color:#111;transform:scale(.85,.9);transform-origin:0 0">0</div><div class="t" style="left:8px;top:333.2px;font-size:11px;line-height:9px;height:9px;font-family:'Liberation Sans',sans-serif;color:#111;transform:scale(.85,.9);transform-origin:0 0">0</div><div class="t" style="left:8px;top:340.8px;font-size:11px;line-height:9px;height:9px;font-family:'Liberation Sans',sans-serif;color:#111;transform:scale(.85,.9);transform-origin:0 0">0</div><div class="t" style="left:8px;top:368.0px;font-size:11px;line-height:9px;height:9px;font-family:'Liberation Sans',sans-serif;color:#111;transform:scale(.85,.9);transform-origin:0 0">1</div><div class="t" style="left:8px;top:375.6px;font-size:11px;line-height:9px;height:9px;font-family:'Liberation Sans',sans-serif;color:#111;transform:scale(.85,.9);transform-origin:0 0">0</div><div class="t" style="left:8px;top:383.2px;font-size:11px;line-height:9px;height:9px;font-family:'Liberation Sans',sans-serif;color:#111;transform:scale(.85,.9);transform-origin:0 0">5</div><div class="t" style="left:8px;top:390.8px;font-size:11px;line-height:9px;height:9px;font-family:'Liberation Sans',sans-serif;color:#111;transform:scale(.85,.9);transform-origin:0 0">0</div><div class="t" style="left:8px;top:418.0px;font-size:11px;line-height:9px;height:9px;font-family:'Liberation Sans',sans-serif;color:#111;transform:scale(.85,.9);transform-origin:0 0">1</div><div class="t" style="left:8px;top:425.6px;font-size:11px;line-height:9px;height:9px;font-family:'Liberation Sans',sans-serif;color:#111;transform:scale(.85,.9);transform-origin:0 0">1</div><div class="t" style="left:8px;top:433.2px;font-size:11px;line-height:9px;height:9px;font-family:'Liberation Sans',sans-serif;color:#111;transform:scale(.85,.9);transform-origin:0 0">0</div><div class="t" style="left:8px;top:440.8px;font-size:11px;line-height:9px;height:9px;font-family:'Liberation Sans',sans-serif;color:#111;transform:scale(.85,.9);transform-origin:0 0">0</div><div class="t" style="left:8px;top:468.0px;font-size:11px;line-height:9px;height:9px;font-family:'Liberation Sans',sans-serif;color:#111;transform:scale(.85,.9);transform-origin:0 0">1</div><div class="t" style="left:8px;top:475.6px;font-size:11px;line-height:9px;height:9px;font-family:'Liberation Sans',sans-serif;color:#111;transform:scale(.85,.9);transform-origin:0 0">1</div><div class="t" style="left:8px;top:483.2px;font-size:11px;line-height:9px;height:9px;font-family:'Liberation Sans',sans-serif;color:#111;transform:scale(.85,.9);transform-origin:0 0">5</div><div class="t" style="left:8px;top:490.8px;font-size:11px;line-height:9px;height:9px;font-family:'Liberation Sans',sans-serif;color:#111;transform:scale(.85,.9);transform-origin:0 0">0</div><div class="t" style="left:8px;top:518.0px;font-size:11px;line-height:9px;height:9px;font-family:'Liberation Sans',sans-serif;color:#111;transform:scale(.85,.9);transform-origin:0 0">1</div><div class="t" style="left:8px;top:525.6px;font-size:11px;line-height:9px;height:9px;font-family:'Liberation Sans',sans-serif;color:#111;transform:scale(.85,.9);transform-origin:0 0">2</div><div class="t" style="left:8px;top:533.2px;font-size:11px;line-height:9px;height:9px;font-family:'Liberation Sans',sans-serif;color:#111;transform:scale(.85,.9);transform-origin:0 0">0</div><div class="t" style="left:8px;top:540.8px;font-size:11px;line-height:9px;height:9px;font-family:'Liberation Sans',sans-serif;color:#111;transform:scale(.85,.9);transform-origin:0 0">0</div><div class="a" style="left:22px;top:175px;width:746px;height:397px;overflow:hidden;background:#f2f1e3"><div class="a" style="left:0;top:0;width:747px;height:397px;background:repeating-linear-gradient(135deg,#f2f1e3 0,#f2f1e3 2.650px,#fff 2.850px,#fff 3.350px,#f2f1e3 3.5355px)"></div><div class="a" style="left:11px;top:-5px;width:724px;height:373px;background:#fff"></div><svg class="a" style="left:11px;top:0" width="724" height="368"><path d="M.5 0V367.500H723.500V0" fill="none" stroke="#000" stroke-width="1" stroke-dasharray="3 2"/></svg><div class="a" style="left:12px;top:-5px;width:722px;height:372px;border:1px solid #ff9c00;border-top:none;background:#fff"></div></div><div class="a" style="left:47px;top:175px;width:345px;height:7px;overflow:hidden"><div class="t" style="left:0;top:-8px;letter-spacing:1px;font-size:12.500px;width:537px;overflow:hidden">りんじゃりとじらくょうりょい、おわっことわことくしょりんじゃりとじらくょうりょいおわっじょしょりじ？</div></div><svg class="a" style="left:595px;top:175px" width="150" height="26"><rect width="150" height="25.500" fill="#30364a"/><path d="M0 0h30l-20 25.500H0zM112 0h38v25.500h-36l8-10z" fill="#2b3043"/><path d="M46.600 0h36.700L76 25.500H52.500z" fill="#8496b4"/><path d="M54 0h15l4 12-3 13.500h-14z" fill="#9aacc6"/><path d="M69 0h8l-5 14z" fill="#7a8cab"/><circle cx="63" cy="17.500" r="2" fill="#c8d0dc" stroke="#e8ecf2" stroke-width=".6"/></svg><div class="t" style="left:506px;top:198px;font-size:12.5px;letter-spacing:0.09px;">2008年4月21日</div>
<div class="a" style="left:45px;top:221px;width:700px;height:26px;background:#efefef"></div><div class="a" style="left:46px;top:230px;width:699px;height:1px;background:#e4e4e4"></div><svg class="a" style="left:45px;top:220px" width="702" height="28"><g stroke="#159a22" fill="none" stroke-width="1"><path d="M.500 2v26M699.500 2v26M.500 8.500h319M380 8.500h319.500"/><path d="M13.500 19v5M145.500 19v5M13.500 21.500h52M95 21.500h50.500"/><path d="M167.500 19v5M686.500 19v5M167.500 21.500h243M442 21.500h244.500"/></g><g fill="#159a22"><path d="M372 7h6l-3 3zM85.500 20h6l-3 3zM432.500 20h6l-3 3z"/></g><g font-family="Liberation Sans,sans-serif" font-size="9.500" fill="#159a22"><text x="321" y="11.500" textLength="49" lengthAdjust="spacingAndGlyphs">100% (699)</text><text x="68" y="24.500">130</text><text x="414.500" y="24.500">518</text></g></svg><div class="a" style="left:45px;top:247px;width:700px;height:284px;border:1px solid;border-color:#c8c8c8 #808080 #808080 #c8c8c8;background:#fff"></div><div class="a" style="left:48px;top:250px;width:694px;height:78px;background:#ffcc00;border:1px solid;border-color:#808088 #c8c8c8 #c8c8c8 #808088"></div><div class="t" style="left:217px;top:269px;font-size:32px;font-weight:700;font-family:'Liberation Sans','Noto Sans CJK JP',sans-serif;color:#fff;line-height:40px;height:40px;transform:scaleX(0.9921);transform-origin:0 50%;-webkit-text-stroke-width:0.7px;text-shadow:2px 3px 3px rgba(140,100,0,.8)">学校通信</div>
<div class="t" style="left:380px;top:269px;font-size:32px;font-weight:700;font-family:'Liberation Sans','Noto Sans CJK JP',sans-serif;color:#fff;line-height:40px;height:40px;-webkit-text-stroke-width:0.7px;text-shadow:2px 3px 3px rgba(140,100,0,.8)"><span style="display:inline-block;width:198.00px;vertical-align:top"><span style="display:inline-block;transform:scaleX(1.000);transform-origin:0 50%;letter-spacing:-3.71px">バックナンバー</span></span></div>
<div class="a" style="left:48px;top:330px;width:152px;height:48px;background:#ffcc00;border:1px solid;border-color:#808088 #c8c8c8 #c8c8c8 #808088"></div><div class="a" style="left:202px;top:330px;width:540px;height:48px;background:#fff;border:1px solid;border-color:#808088 #c8c8c8 #c8c8c8 #808088"></div><div class="t" style="left:108px;top:347px;letter-spacing:0.66px;">4月号</div>
<div class="t" style="left:213.5px;top:341px;font-size:12.5px;font-weight:bold;">新学期<span style="display:inline-block;width:47.50px;vertical-align:top"><span style="display:inline-block;transform:scaleX(1.000);transform-origin:0 50%;letter-spacing:-0.62px">スタート</span></span></div>
<div class="t" style="left:213.7px;top:355px;font-size:12.5px;transform:scaleX(0.9893);transform-origin:0 50%;">始業式</div>
<div class="t" style="left:278px;top:355px;font-size:12.5px;transform:scaleX(0.9867);transform-origin:0 50%;">入学式</div>
<div class="t" style="left:342.6px;top:355px;font-size:12.5px;">1年生<span style="display:inline-block;width:11.35px;vertical-align:top"><span style="display:inline-block;transform:scaleX(1.000);transform-origin:0 50%;letter-spacing:-1.15px">を</span></span>迎<span style="display:inline-block;width:22.70px;vertical-align:top"><span style="display:inline-block;transform:scaleX(1.000);transform-origin:0 50%;letter-spacing:-1.15px">える</span></span>会</div>
<div class="t" style="left:461px;top:355px;font-size:12.5px;transform:scaleX(0.9787);transform-origin:0 50%;">参観会</div>
<div class="t" style="left:259.5px;top:355px;font-size:12.5px;-webkit-text-stroke-width:0;transform:skewX(-12deg) scaleX(1.300);color:#333">/</div>
<div class="t" style="left:323.5px;top:355px;font-size:12.5px;-webkit-text-stroke-width:0;transform:skewX(-12deg) scaleX(1.300);color:#333">/</div>
<div class="t" style="left:441.5px;top:355px;font-size:12.5px;-webkit-text-stroke-width:0;transform:skewX(-12deg) scaleX(1.300);color:#333">/</div>
<div class="a" style="left:48px;top:380px;width:152px;height:48px;background:#ffcc00;border:1px solid;border-color:#808088 #c8c8c8 #c8c8c8 #808088"></div><div class="a" style="left:202px;top:380px;width:540px;height:48px;background:#fff;border:1px solid;border-color:#808088 #c8c8c8 #c8c8c8 #808088"></div><div class="t" style="left:108px;top:397px;letter-spacing:0.66px;">5月号</div>
<div class="t" style="left:213.5px;top:391px;font-size:12.5px;font-weight:bold;"><span style="display:inline-block;width:50.60px;vertical-align:top"><span style="display:inline-block;transform:scaleX(1.000);transform-origin:0 50%;letter-spacing:0.15px">だんだん</span></span>慣<span style="display:inline-block;width:75.90px;vertical-align:top"><span style="display:inline-block;transform:scaleX(1.000);transform-origin:0 50%;letter-spacing:0.15px">れてきました</span></span></div>
<div class="t" style="left:213.7px;top:405px;font-size:12.5px;">朝<span style="display:inline-block;width:12.50px;vertical-align:top"><span style="display:inline-block;transform:scaleX(1.000);transform-origin:0 50%;letter-spacing:0.00px">の</span></span>活動</div>
<div class="t" style="left:291px;top:405px;font-size:12.5px;transform:scaleX(0.9920);transform-origin:0 50%;">家庭訪問</div>
<div class="t" style="left:368px;top:405px;font-size:12.5px;letter-spacing:0.20px;">地域廃品回収</div>
<div class="t" style="left:472.3px;top:405px;font-size:12.5px;transform:scaleX(0.9840);transform-origin:0 50%;">非難訓練</div>
<div class="t" style="left:276.5px;top:405px;font-size:12.5px;-webkit-text-stroke-width:0;transform:skewX(-12deg) scaleX(1.300);color:#333">/</div>
<div class="t" style="left:351.5px;top:405px;font-size:12.5px;-webkit-text-stroke-width:0;transform:skewX(-12deg) scaleX(1.300);color:#333">/</div>
<div class="t" style="left:454.3px;top:405px;font-size:12.5px;-webkit-text-stroke-width:0;transform:skewX(-12deg) scaleX(1.300);color:#333">/</div>
<div class="a" style="left:48px;top:430px;width:152px;height:48px;background:#ffcc00;border:1px solid;border-color:#808088 #c8c8c8 #c8c8c8 #808088"></div><div class="a" style="left:202px;top:430px;width:540px;height:48px;background:#fff;border:1px solid;border-color:#808088 #c8c8c8 #c8c8c8 #808088"></div><div class="t" style="left:108px;top:447px;letter-spacing:0.66px;">6月号</div>
<div class="t" style="left:213.5px;top:441px;font-size:12.5px;font-weight:bold;letter-spacing:0.69px;">楽しかった修学旅行</div>
<div class="t" style="left:213.7px;top:455px;font-size:12.5px;letter-spacing:0.34px;">6年生の修学旅行</div>
<div class="t" style="left:336.7px;top:455px;font-size:12.5px;letter-spacing:0.30px;">自転車教室</div>
<div class="t" style="left:427.7px;top:455px;font-size:12.5px;transform:scaleX(0.9920);transform-origin:0 50%;">挨拶運動</div>
<div class="t" style="left:504px;top:455px;font-size:12.5px;transform:scaleX(0.9600);transform-origin:0 50%;">遠足</div>
<div class="t" style="left:319.5px;top:455px;font-size:12.5px;-webkit-text-stroke-width:0;transform:skewX(-12deg) scaleX(1.300);color:#333">/</div>
<div class="t" style="left:409.5px;top:455px;font-size:12.5px;-webkit-text-stroke-width:0;transform:skewX(-12deg) scaleX(1.300);color:#333">/</div>
<div class="t" style="left:485.5px;top:455px;font-size:12.5px;-webkit-text-stroke-width:0;transform:skewX(-12deg) scaleX(1.300);color:#333">/</div>
<div class="a" style="left:48px;top:480px;width:152px;height:48px;background:#ffcc00;border:1px solid;border-color:#808088 #c8c8c8 #c8c8c8 #808088"></div><div class="a" style="left:202px;top:480px;width:540px;height:48px;background:#fff;border:1px solid;border-color:#808088 #c8c8c8 #c8c8c8 #808088"></div><div class="t" style="left:108px;top:497px;letter-spacing:0.66px;">7月号</div>
<div class="t" style="left:213.5px;top:491px;font-size:12.5px;font-weight:bold;letter-spacing:0.71px;">夏休みに入ります</div>
<div class="t" style="left:213.7px;top:505px;font-size:12.5px;"><span style="display:inline-block;width:33.98px;vertical-align:top"><span style="display:inline-block;transform:scaleX(1.000);transform-origin:0 50%;letter-spacing:-1.17px">プール</span></span>開<span style="display:inline-block;width:11.33px;vertical-align:top"><span style="display:inline-block;transform:scaleX(1.000);transform-origin:0 50%;letter-spacing:-1.17px">き</span></span></div>
<div class="t" style="left:298.4px;top:505px;font-size:12.5px;letter-spacing:0.10px;">親子給食会</div>
<div class="t" style="left:388.7px;top:505px;font-size:12.5px;letter-spacing:0.38px;">国際交流会</div>
<div class="t" style="left:478.5px;top:505px;font-size:12.5px;">地域<span style="display:inline-block;width:63.70px;vertical-align:top"><span style="display:inline-block;transform:scaleX(0.969);transform-origin:0 50%;letter-spacing:-1.55px">ボランティア</span></span></div>
<div class="t" style="left:281.5px;top:505px;font-size:12.5px;-webkit-text-stroke-width:0;transform:skewX(-12deg) scaleX(1.300);color:#333">/</div>
<div class="t" style="left:371.1px;top:505px;font-size:12.5px;-webkit-text-stroke-width:0;transform:skewX(-12deg) scaleX(1.300);color:#333">/</div>
<div class="t" style="left:462.1px;top:505px;font-size:12.5px;-webkit-text-stroke-width:0;transform:skewX(-12deg) scaleX(1.300);color:#333">/</div>
<div class="a" style="left:768px;top:175px;width:17px;height:397px;background:linear-gradient(to right,#f3f1ec,#fefefb)"></div><div class="a" style="left:769px;top:175px;width:15px;height:16px;border:1px solid #fff;border-radius:3px;background:linear-gradient(to right,#cddafc,#b9cbf7);box-shadow:inset 0 0 0 1px #bccdf6,0 1px 0 #8fa9e6"><div class="a" style="left:2.5px;top:6px;width:6px;height:6px;border-right:2px solid #4d6185;border-bottom:2px solid #4d6185;transform:rotate(-135deg)"></div></div><div class="a" style="left:769px;top:554px;width:15px;height:16px;border:1px solid #fff;border-radius:3px;background:linear-gradient(to right,#cddafc,#b9cbf7);box-shadow:inset 0 0 0 1px #bccdf6,0 1px 0 #8fa9e6"><div class="a" style="left:2.5px;top:3px;width:6px;height:6px;border-right:2px solid #4d6185;border-bottom:2px solid #4d6185;transform:rotate(45deg)"></div></div><div class="a" style="left:769px;top:441px;width:15px;height:112px;border:1px solid #fff;border-radius:3px;background:linear-gradient(to right,#cddafc,#b9cbf7);box-shadow:inset 0 0 0 1px #bccdf6,0 1px 0 #8fa9e6"></div><svg class="a" style="left:772.500px;top:493px" width="8" height="8"><path d="M1 .5h6M1 2.500h6M1 4.500h6M1 6.500h6" stroke="#eef3ff"/><path d="M2 1.500h6M2 3.500h6M2 5.500h6M2 7.500h6" stroke="#8ea5dc"/></svg><div class="a" style="left:7px;top:572px;width:778px;height:18px;background:#ece9d8;border-top:1px solid #fff"></div><div class="t" style="left:8px;top:573px;-webkit-text-stroke-width:0;transform:scaleX(0.9112);transform-origin:0 50%;">&lt;body&gt; &lt;div#base&gt; &lt;table&gt; &lt;tr&gt; &lt;td&gt;</div>
<div class="a" style="left:522px;top:573px;width:19px;height:16px;border:1px solid #7d9fd0;border-radius:3px;background:#fff"></div><svg class="a" style="left:528px;top:575px" width="9" height="13"><path d="M.5 .5v10l2.500-2.500 2 4.500 1.500-.8-2-4.200h3.500z" fill="#000" stroke="#000" stroke-width=".5"/></svg><svg class="a" style="left:546px;top:574px" width="15" height="15"><path d="M3 8V4q1-1.500 2 0V2q1-1.500 2 0v0q1-1.500 2 0v1q1-1.500 2 0v6q0 4-4 5-4-1-5-6L.5 7q1-1 2.500 1z" fill="#f2c9a0" stroke="#7a4a2a" stroke-width=".9"/></svg><svg class="a" style="left:566px;top:574px" width="14" height="15"><circle cx="5.500" cy="5.500" r="4" fill="#d6e9ff" stroke="#2c5fd0" stroke-width="1.800"/><path d="M8.500 8.500l4 4.500" stroke="#c0442a" stroke-width="2.200"/></svg><div class="a" style="left:588px;top:573px;width:53px;height:16px;background:#fff"></div><div class="t" style="left:589px;top:573px;-webkit-text-stroke-width:0;transform:scaleX(0.7817);transform-origin:0 50%;">100%</div>
<div class="a" style="left:631px;top:577px;width:5px;height:5px;border-right:2px solid #555;border-bottom:2px solid #555;transform:rotate(45deg)"></div><div class="t" style="left:645px;top:575px;-webkit-text-stroke-width:0;transform:scaleX(0.9484);transform-origin:0 50%;">763 x 396</div>
<div class="a" style="left:698px;top:578px;width:4px;height:4px;border-right:1.500px solid #555;border-bottom:1.500px solid #555;transform:rotate(45deg)"></div><div class="a" style="left:707px;top:574px;width:2px;height:14px;background:linear-gradient(to right,#aca899 50%,#fff 50%)"></div><div class="t" style="left:711px;top:575px;letter-spacing:0.11px;">81K / 12 秒</div>
<div class="a" style="left:776px;top:574px;width:2px;height:14px;background:linear-gradient(to right,#aca899 50%,#fff 50%)"></div><div class="a" style="left:372px;top:590px;width:49px;height:7px;background:#e4e7ed;border-left:1px solid #f4f6f8;border-right:1px solid #55697f"></div><div class="a" style="left:392px;top:592px;width:0;height:0;border-left:4px solid transparent;border-right:4px solid transparent;border-top:4px solid #222"></div><div class="a" style="left:785px;top:100px;width:8px;height:638px;background:linear-gradient(to right,rgba(20,30,45,.65) 0,rgba(20,30,45,.65) 1px,rgba(20,30,45,.22) 1.200px,rgba(255,255,255,.04) 3.500px,rgba(20,30,45,.25) 5.800px,rgba(20,30,45,.55) 6px,rgba(20,30,45,.55) 7px,#a8a494 7px,#a8a494 8px)"></div><div class="a" style="left:786px;top:366px;width:6px;height:48px;background:#e4e7ed"></div><div class="a" style="left:787px;top:386px;width:0;height:0;border-top:4px solid transparent;border-bottom:4px solid transparent;border-left:4px solid #000"></div><div class="ph" style="left:7px;top:597px;width:778px"></div><div class="grip" style="left:11px;top:602px"></div><div class="tri-d" style="left:21px;top:604px"></div><div class="t" style="left:33px;top:600px;"><span style="display:inline-block;width:44.00px;vertical-align:top"><span style="display:inline-block;transform:scaleX(0.853);transform-origin:0 50%;letter-spacing:-1.69px">プロパティ</span></span></div>
<svg class="a" style="left:768px;top:602px" width="12" height="10"><path d="M0 1.500h2M3 1.500h6M0 4.500h2M3 4.500h6M0 7.500h2M3 7.500h4" stroke="#333" stroke-width="1"/><path d="M7 7h5l-2.500 3z" fill="#333"/></svg><div class="a" style="left:7px;top:617px;width:778px;height:99px;background:#ece9d8"></div><div class="t" style="left:30px;top:625px;"><span style="display:inline-block;width:52.00px;vertical-align:top"><span style="display:inline-block;transform:scaleX(0.842);transform-origin:0 50%;letter-spacing:-1.71px">フォーマット</span></span></div>
<div class="sel" style="left:88px;top:622px;width:103px;height:20px"><div class="btn"></div></div><div class="t" style="left:92px;top:625px;"><span style="display:inline-block;width:19.00px;vertical-align:top"><span style="display:inline-block;transform:scaleX(0.912);transform-origin:0 50%;letter-spacing:-1.58px">なし</span></span></div>
<div class="t" style="left:196px;top:625px;"><span style="display:inline-block;width:36.00px;vertical-align:top"><span style="display:inline-block;transform:scaleX(0.870);transform-origin:0 50%;letter-spacing:-1.66px">スタイル</span></span></div>
<div class="sel" style="left:240px;top:622px;width:138px;height:20px"><div class="btn"></div></div><div class="t" style="left:244px;top:625px;"><span style="display:inline-block;width:19.00px;vertical-align:top"><span style="display:inline-block;transform:scaleX(0.912);transform-origin:0 50%;letter-spacing:-1.58px">なし</span></span></div>
<div class="btnx" style="left:383px;top:624px;width:66px;height:16px"></div><div class="t" style="left:404px;top:625px;-webkit-text-stroke-width:0;transform:scaleX(0.9316);transform-origin:0 50%;">CSS</div>
<div class="t" style="left:457px;top:623px;font-size:14px;font-weight:bold;font-family:'Liberation Serif',serif;line-height:16px;height:16px;-webkit-text-stroke-width:0;-webkit-text-stroke-width:.6px">B</div>
<div class="t" style="left:479px;top:623px;font-size:14px;font-weight:bold;font-style:italic;font-family:'Liberation Serif',serif;line-height:16px;height:16px;-webkit-text-stroke-width:0;-webkit-text-stroke-width:.7px;transform:skewX(-8deg)">I</div>
<svg class="a" style="left:498px;top:625.5px" width="13" height="13.5"><path d="M0 0.6h11M0 3.1h8M0 5.6h11M0 8.1h8M0 10.6h11" stroke="#000" stroke-width="1.200"/></svg><svg class="a" style="left:519px;top:625.5px" width="13" height="13.5"><path d="M0 0.6h11M2 3.1h7M0 5.6h11M2 8.1h7M0 10.6h11" stroke="#000" stroke-width="1.200"/></svg><svg class="a" style="left:540px;top:625.5px" width="13" height="13.5"><path d="M0 0.6h11M3 3.1h8M0 5.6h11M3 8.1h8M0 10.6h11" stroke="#000" stroke-width="1.200"/></svg><svg class="a" style="left:561px;top:625.5px" width="13" height="13.5"><path d="M0 0.6h11M0 3.1h11M0 5.6h11M0 8.1h11M0 10.6h11" stroke="#000" stroke-width="1.200"/></svg><div class="t" style="left:600px;top:625px;"><span style="display:inline-block;width:24.00px;vertical-align:top"><span style="display:inline-block;transform:scaleX(0.787);transform-origin:0 50%;letter-spacing:-1.83px">リンク</span></span></div>
<div class="sel" style="left:630px;top:622px;width:87px;height:20px"><div class="btn"></div></div><svg class="a" style="left:720px;top:625px" width="13" height="14"><circle cx="6.500" cy="7" r="4.700" fill="#f8f8f4" stroke="#222" stroke-width="1.100"/><path d="M6.500 .5v4M6.500 9.500v4M.5 7h3.500M9 7h3.500" stroke="#222"/></svg><svg class="a" style="left:735px;top:625px" width="16" height="13"><path d="M.5 11.500v-9q0-1 1-1h3.500l1.500 1.500h6.500q1 0 1 1v7.500q0 1-1 1h-12q-1 0-1-1z" fill="#f9d870" stroke="#c9952a"/><path d="M1.500 5h12.500" stroke="#fdf0b8"/><path d="M1.500 11.500h12.500" stroke="#e8b848"/></svg><svg class="a" style="left:767px;top:620px" width="14" height="14"><circle cx="7" cy="7" r="5.500" fill="#fff" stroke="#222" stroke-width="1.300"/><text x="4" y="10.500" font-family="Liberation Sans,sans-serif" font-size="9" font-weight="bold">?</text></svg><svg class="a" style="left:768px;top:634px" width="14" height="14"><path d="M1 9l3-4 8 3-3 5z" fill="#fff" stroke="#222"/><path d="M5 8l6-7 2 1.500-6 7-2.500.5z" fill="#e7b43a" stroke="#222" stroke-width=".8"/></svg><div class="t" style="left:47px;top:648px;"><span style="display:inline-block;width:35.00px;vertical-align:top"><span style="display:inline-block;transform:scaleX(0.849);transform-origin:0 50%;letter-spacing:-1.70px">フォント</span></span></div>
<div class="sel" style="left:88px;top:644px;width:103px;height:20px"><div class="btn"></div></div><div class="t" style="left:92px;top:647px;"><span style="display:inline-block;width:35.33px;vertical-align:top"><span style="display:inline-block;transform:scaleX(0.856);transform-origin:0 50%;letter-spacing:-1.68px">フォント</span></span>指定<span style="display:inline-block;width:17.67px;vertical-align:top"><span style="display:inline-block;transform:scaleX(0.856);transform-origin:0 50%;letter-spacing:-1.68px">なし</span></span></div>
<div class="t" style="left:205px;top:648px;"><span style="display:inline-block;width:28.00px;vertical-align:top"><span style="display:inline-block;transform:scaleX(0.898);transform-origin:0 50%;letter-spacing:-1.60px">サイズ</span></span></div>
<div class="sel" style="left:240px;top:644px;width:65px;height:20px"><div class="btn"></div></div><div class="t" style="left:244px;top:647px;"><span style="display:inline-block;width:19.00px;vertical-align:top"><span style="display:inline-block;transform:scaleX(0.912);transform-origin:0 50%;letter-spacing:-1.58px">なし</span></span></div>
<div class="sel dis" style="left:307px;top:644px;width:71px;height:20px"><div class="btn"></div></div><div class="sw" style="left:383px;top:646px"><i></i><b></b></div><div class="inp" style="left:405px;top:645px;width:68px;height:22px;border-bottom:none"></div><svg class="a" style="left:498px;top:648px" width="13" height="12"><path d="M0 1.500h2.500M0 5.500h2.500M0 9.500h2.500" stroke="#00008b" stroke-width="2.500"/><path d="M5 1.500h7M5 5.500h7M5 9.500h7" stroke="#000" stroke-width="1.200"/></svg><svg class="a" style="left:519px;top:648px" width="13" height="12"><path d="M.5 1l1-1v3.500M0 5h2v1.500h-2v1.500h2M0 9.500h2v2.500h-2M0 10.800h2" stroke="#00008b" fill="none" stroke-width=".9"/><path d="M5 1.500h7M5 5.500h7M5 9.500h7" stroke="#000" stroke-width="1.200"/></svg><svg class="a" style="left:540px;top:649px" width="13" height="11"><path d="M5 3h-4.500M2.500 .8l-2.200 2.200 2.200 2.200" stroke="#00008b" fill="none" stroke-width="1.200"/><path d="M7 1.500h5M7 4.500h5" stroke="#000" stroke-width="1.800"/><path d="M0 8h12M0 10.500h12" stroke="#000" stroke-width="1.200"/></svg><svg class="a" style="left:561px;top:649px" width="13" height="11"><path d="M0 3h4.500M2.500 .8l2.200 2.200-2.200 2.200" stroke="#00008b" fill="none" stroke-width="1.200"/><path d="M7 1.500h5M7 4.500h5" stroke="#000" stroke-width="1.800"/><path d="M0 8h12M0 10.500h12" stroke="#000" stroke-width="1.200"/></svg><div class="t" style="left:583px;top:648px;"><span style="display:inline-block;width:43.00px;vertical-align:top"><span style="display:inline-block;transform:scaleX(0.837);transform-origin:0 50%;letter-spacing:-1.72px">ターゲット</span></span></div>
<div class="sel dis" style="left:630px;top:645px;width:67px;height:19px"><div class="btn"></div></div><div class="a" style="left:7px;top:666px;width:778px;height:2px;background:linear-gradient(to bottom,#aca899 50%,#fff 50%)"></div><div class="a" style="left:13px;top:669px;width:35px;height:37px;background:#f2f2f0;border:1px solid;border-color:#000 #fff #fff #000"></div><svg class="a" style="left:17px;top:673px" width="28" height="30"><rect x="1" y="1" width="24" height="26" fill="#f8f8f6"/><path d="M26.500 3v25.500H3" fill="none" stroke="#8a8a88" stroke-width="2"/><g fill="none" stroke="#9a9a98"><path d="M1.500 9v-6h9M14.500 9v-6h9M1.500 19v-1M14.500 19v-6h9M1.500 27v-5h9M14.500 27v-5h9"/></g><rect x="2" y="12" width="9" height="6" fill="#7a7a7a" stroke="#333"/></svg><div class="t" style="left:72px;top:675px;"><span style="display:inline-block;width:18.00px;vertical-align:top"><span style="display:inline-block;transform:scaleX(0.870);transform-origin:0 50%;letter-spacing:-1.66px">セル</span></span></div>
<div class="t" style="left:120px;top:672px;">横</div>
<div class="sel" style="left:137px;top:670px;width:70px;height:20px"><div class="btn"></div></div><div class="t" style="left:141px;top:673px;letter-spacing:0.00px;">中央</div>
<div class="t" style="left:212px;top:672px;">幅</div>
<div class="inp" style="left:227px;top:671px;width:40px;height:17px"></div><div class="t" style="left:245px;top:673px;-webkit-text-stroke-width:0;transform:scaleX(0.9485);transform-origin:0 50%;">130</div>
<div class="t" style="left:287px;top:673px;">折<span style="display:inline-block;width:8.75px;vertical-align:top"><span style="display:inline-block;transform:scaleX(0.849);transform-origin:0 50%;letter-spacing:-1.70px">り</span></span>返<span style="display:inline-block;width:26.25px;vertical-align:top"><span style="display:inline-block;transform:scaleX(0.849);transform-origin:0 50%;letter-spacing:-1.70px">さない</span></span></div>
<div class="cb" style="left:350px;top:673px"></div><div class="t" style="left:368px;top:673px;letter-spacing:0.00px;">背景(<u>B</u>)</div>
<div class="inp" style="left:412px;top:671px;width:205px;height:17px"></div><svg class="a" style="left:620px;top:673px" width="13" height="14"><circle cx="6.500" cy="7" r="4.700" fill="#f8f8f4" stroke="#222" stroke-width="1.100"/><path d="M6.500 .5v4M6.500 9.500v4M.5 7h3.500M9 7h3.500" stroke="#222"/></svg><svg class="a" style="left:636px;top:673px" width="16" height="13"><path d="M.5 11.500v-9q0-1 1-1h3.500l1.500 1.500h6.500q1 0 1 1v7.500q0 1-1 1h-12q-1 0-1-1z" fill="#f9d870" stroke="#c9952a"/><path d="M1.500 5h12.500" stroke="#fdf0b8"/><path d="M1.500 11.500h12.500" stroke="#e8b848"/></svg><div class="btnx" style="left:664px;top:671px;width:91px;height:16px;border-radius:4px"></div><div class="t" style="left:670px;top:672px;"><span style="display:inline-block;width:68.98px;vertical-align:top"><span style="display:inline-block;transform:scaleX(0.839);transform-origin:0 50%;letter-spacing:-1.72px">ページプロパティ</span></span>...</div>
<svg class="a" style="left:72px;top:697px" width="15" height="11"><rect x=".5" y=".5" width="12" height="8" fill="#f0f0ee" stroke="#777"/><path d="M1 9.500h13V1" stroke="#aaa" fill="none"/><path d="M6.500 2v5" stroke="#777" stroke-dasharray="1 1"/></svg><svg class="a" style="left:95px;top:694px" width="15" height="16"><path d="M1 4h5v9H1M13 4H9v9h4" fill="none" stroke="#000" stroke-width="1.300"/><path d="M3 14.500h9" stroke="#888"/><path d="M5 0l2 2 2-2M5 16l2-2 2 2" stroke="#2233cc" fill="none" stroke-dasharray="1 1"/></svg><div class="t" style="left:120px;top:695px;">縦</div>
<div class="sel" style="left:137px;top:692px;width:70px;height:20px"><div class="btn"></div></div><div class="t" style="left:141px;top:695px;">指定<span style="display:inline-block;width:19.00px;vertical-align:top"><span style="display:inline-block;transform:scaleX(0.912);transform-origin:0 50%;letter-spacing:-1.58px">なし</span></span></div>
<div class="t" style="left:212px;top:695px;">高</div>
<div class="inp" style="left:227px;top:693px;width:40px;height:17px"></div><div class="t" style="left:321px;top:696px;"><span style="display:inline-block;width:24.00px;vertical-align:top"><span style="display:inline-block;transform:scaleX(0.787);transform-origin:0 50%;letter-spacing:-1.83px">ヘッダ</span></span></div>
<div class="cb" style="left:350px;top:695px"></div><div class="t" style="left:368px;top:696px;transform:scaleX(0.9679);transform-origin:0 50%;">背景(<u>G</u>)</div>
<div class="sw" style="left:413px;top:692px;width:19px;height:17px"><i style="background:#ffcc00"></i><b></b></div><div class="inp" style="left:438px;top:695px;width:78px;height:17px"></div><div class="t" style="left:440px;top:696px;-webkit-text-stroke-width:0;transform:scaleX(0.9036);transform-origin:0 50%;">#FFCC00</div>
<div class="t" style="left:535px;top:696px;transform:scaleX(0.8350);transform-origin:0 50%;">ボーダー(<u>R</u>)</div>
<div class="sw" style="left:592px;top:692px;width:19px;height:17px"><i></i><b></b></div><div class="inp" style="left:617px;top:695px;width:78px;height:17px"></div><svg class="a" style="left:770px;top:704px" width="10" height="7"><path d="M1 6l4-5 4 5z" fill="#fff" stroke="#000"/></svg><div class="ph" style="left:7px;top:716px;width:778px"></div><div class="grip" style="left:11px;top:721px"></div><div class="tri-r" style="left:23px;top:721px"></div><div class="t" style="left:33px;top:719px;letter-spacing:0.00px;">結果</div>
<div class="a" style="left:0;top:736px;width:792px;height:2px;background:linear-gradient(to bottom,#c5c1ab 50%,#f6f4ea 50%)"></div><div class="a" style="left:792px;top:46px;width:232px;height:692px;background:#ece9d8"></div><div class="ph" style="left:792px;top:46px;width:232px"></div><div class="grip" style="left:796px;top:51px"></div><div class="tri-r" style="left:808px;top:51px"></div><div class="t" style="left:819px;top:49px;-webkit-text-stroke-width:0;transform:scaleX(0.9316);transform-origin:0 50%;">CSS</div>
<div class="ph" style="left:792px;top:66px;width:232px"></div><div class="grip" style="left:796px;top:71px"></div><div class="tri-r" style="left:808px;top:71px"></div><div class="t" style="left:819px;top:69px;"><span style="display:inline-block;width:69.00px;vertical-align:top"><span style="display:inline-block;transform:scaleX(0.839);transform-origin:0 50%;letter-spacing:-1.72px">アプリケーション</span></span></div>
<div class="ph" style="left:792px;top:86px;width:232px"></div><div class="grip" style="left:796px;top:91px"></div><div class="tri-r" style="left:808px;top:91px"></div><div class="t" style="left:819px;top:89px;"><span style="display:inline-block;width:69.00px;vertical-align:top"><span style="display:inline-block;transform:scaleX(0.839);transform-origin:0 50%;letter-spacing:-1.72px">タグインスペクタ</span></span></div>
<div class="ph" style="left:792px;top:106px;width:232px"></div><div class="grip" style="left:796px;top:111px"></div><div class="tri-d" style="left:806px;top:113px"></div><div class="t" style="left:819px;top:109px;"><span style="display:inline-block;width:34.00px;vertical-align:top"><span style="display:inline-block;transform:scaleX(0.828);transform-origin:0 50%;letter-spacing:-1.74px">ファイル</span></span></div>
<svg class="a" style="left:1008px;top:111px" width="12" height="10"><path d="M0 1.500h2M3 1.500h6M0 4.500h2M3 4.500h6M0 7.500h2M3 7.500h4" stroke="#333" stroke-width="1"/><path d="M7 7h5l-2.500 3z" fill="#333"/></svg><div class="a" style="left:792px;top:126px;width:232px;height:19px;background:#9eaec4"></div><svg class="a" style="left:792px;top:126px" width="54" height="19"><path d="M0 19V6Q0 1 5 1H38Q41 1 42.500 4L50 19Z" fill="#ece9d8"/><path d="M0.500 19V6Q0.500 1.500 5 1.500H38Q41 1.500 42.500 4" fill="none" stroke="#fbfbf8"/></svg><div class="t" style="left:798px;top:128.5px;"><span style="display:inline-block;width:34.00px;vertical-align:top"><span style="display:inline-block;transform:scaleX(0.828);transform-origin:0 50%;letter-spacing:-1.74px">ファイル</span></span></div>
<div class="t" style="left:849px;top:128.5px;color:#eef1f6;"><span style="display:inline-block;width:35.00px;vertical-align:top"><span style="display:inline-block;transform:scaleX(0.849);transform-origin:0 50%;letter-spacing:-1.70px">アセット</span></span></div>
<div class="sep" style="left:891px;top:129px;height:13px;background:#7d8ca3"></div><div class="t" style="left:899px;top:128.5px;color:#eef1f6;"><span style="display:inline-block;width:43.00px;vertical-align:top"><span style="display:inline-block;transform:scaleX(0.837);transform-origin:0 50%;letter-spacing:-1.72px">スニペット</span></span></div>
<div class="sel" style="left:797px;top:150px;width:131px;height:21px"><div class="btn"></div></div><svg width="0" height="0" style="position:absolute"><defs><linearGradient id="gfo" x1="0" y1="0" x2="0" y2="1"><stop offset="0" stop-color="#e6f8a8"/><stop offset=".45" stop-color="#b8e45a"/><stop offset="1" stop-color="#8cc828"/></linearGradient></defs></svg><svg class="a" style="left:800px;top:153px" width="16" height="15"><path d="M1 11.500v-8.500q0-1.500 1.500-1.500h3q1 0 1.500 1l.5 .5h5.500q1.500 0 1.500 1.500v1" fill="#9ccc3a" stroke="#476a0e" stroke-width="1.300"/><path d="M1.500 12.500q-.8 0-.6-1l1-5.500q.2-1 1.200-1h11q1 0 .8 1l-.9 5.500q-.2 1-1.200 1z" fill="url(#gfo)" stroke="#476a0e" stroke-width="1.300"/></svg><div class="t" style="left:820px;top:154px;transform:scaleX(0.9792);transform-origin:0 50%;">学校通信</div>
<div class="sel" style="left:933px;top:150px;width:87px;height:21px"><div class="btn"></div></div><div class="t" style="left:937px;top:154px;"><span style="display:inline-block;width:62.00px;vertical-align:top"><span style="display:inline-block;transform:scaleX(0.858);transform-origin:0 50%;letter-spacing:-1.68px">ローカルビュー</span></span></div>
<svg class="a" style="left:801px;top:174px" width="18" height="18"><path d="M2 2l5 1-1 4zM16 15l-5-1 1-4z" fill="#8fd0f7" stroke="#2d6fd0"/><path d="M5 5l8 8" stroke="#6fb6ee" stroke-width="3"/><circle cx="4" cy="14" r="2.500" fill="#bbb" stroke="#777"/></svg><svg class="a" style="left:829px;top:175px" width="16" height="16"><path d="M12.500 9A5 5 0 1 1 8 3.500" fill="none" stroke="#3a3fb0" stroke-width="2.800"/><path d="M7 0h7v7z" fill="#3a3fb0"/></svg><div class="a" style="left:856px;top:173px;width:2px;height:21px;background:linear-gradient(to right,#8a877a 50%,#fff 50%)"></div><svg class="a" style="left:867px;top:175px" width="14" height="16"><path d="M4.500 1h5v7h3.500l-6 7-6-7h3.500z" fill="#8fe07a" stroke="#2f8a2a"/></svg><svg class="a" style="left:892px;top:175px" width="14" height="16"><path d="M4.500 15h5V8h3.500l-6-7-6 7h3.500z" fill="#7fb6f2" stroke="#2d5fb0"/></svg><svg class="a" style="left:917px;top:175px" width="18" height="16"><path d="M3.500 1h4v7h3l-5 7-5-7h3z" fill="#fff" stroke="#777"/><path d="M10 5l2 3 4-7" fill="none" stroke="#555" stroke-width="1.500"/></svg><svg class="a" style="left:943px;top:175px" width="16" height="16"><path d="M4.500 13V8h-3.500l6-7 6 7h-3.500v2" fill="#f4f4f4" stroke="#888"/><rect x="7" y="10" width="7" height="5" fill="#aaa" stroke="#666"/><path d="M8.500 10v-2q2-2 4 0v2" fill="none" stroke="#666"/></svg><svg class="a" style="left:970px;top:175px" width="17" height="16"><path d="M3 7A5.500 5 0 0 1 13 5M14 9A5.500 5 0 0 1 4 11" fill="none" stroke="#9a9a9a" stroke-width="2.200"/><path d="M11 2h5v5zM6 14H1V9z" fill="#9a9a9a"/></svg><div class="a" style="left:993px;top:173px;width:2px;height:21px;background:linear-gradient(to right,#8a877a 50%,#fff 50%)"></div><svg class="a" style="left:1004px;top:175px" width="16" height="16"><rect x="1" y="1" width="14" height="13" fill="#fff" stroke="#3d7bd6" stroke-width="1.500"/><rect x="1.500" y="1.500" width="13" height="3" fill="#7fb0ee"/><path d="M6.500 5v9" stroke="#3d7bd6"/><rect x="2" y="8" width="4" height="3" fill="#d8c8f0"/><path d="M9 7l5-5M10 2h4v4" stroke="#124" stroke-width="1.300" fill="none"/></svg><div class="a" style="left:793px;top:198px;width:230px;height:516px;background:#fff;border-left:1.500px solid #000;border-top:1.500px solid #000"></div><div class="a" style="left:795px;top:199px;width:227px;height:15px;background:#ece9d8;border-bottom:1px solid #3a3a36"></div><div class="t" style="left:797px;top:200px;font-weight:bold;"><span style="display:inline-block;width:78.00px;vertical-align:top"><span style="display:inline-block;transform:scaleX(0.932);transform-origin:0 50%;letter-spacing:-1.54px">ローカルファイル</span></span></div>
<div class="a" style="left:957px;top:200px;width:2px;height:13px;background:linear-gradient(to right,#555 50%,#fff 50%)"></div><div class="t" style="left:962px;top:200px;font-weight:bold;"><span style="display:inline-block;width:32.00px;vertical-align:top"><span style="display:inline-block;transform:scaleX(1.000);transform-origin:0 50%;letter-spacing:-1.33px">サイズ</span></span></div>
<div class="a" style="left:996px;top:200px;width:2px;height:13px;background:linear-gradient(to right,#555 50%,#fff 50%)"></div><div class="t" style="left:999px;top:200px;font-weight:bold;max-width:23px;overflow:hidden"><span style="display:inline-block;width:30.00px;vertical-align:top"><span style="display:inline-block;transform:scaleX(0.953);transform-origin:0 50%;letter-spacing:-1.51px">タイプ</span></span></div>
<div class="a" style="left:795px;top:214px;width:227px;height:18px;background:#ece9d8"></div><svg class="a" style="left:795px;top:214px" width="80" height="170"><path d="M24.500 18v137M29 27.500h9M29 117.500h9M25 135.500h12M25 153.500h12M44.500 36v63M45 45.500h12M45 63.500h12M45 81.500h12M45 99.500h12" stroke="#808080" stroke-dasharray="1 1" fill="none"/></svg><svg class="a" style="left:799px;top:218px" width="9" height="9"><rect x=".5" y=".5" width="8" height="8" fill="#fff" stroke="#808080"/><path d="M2 4.500h5" stroke="#000"/></svg><svg class="a" style="left:813px;top:214.5px" width="16" height="15"><path d="M1 11.500v-8.500q0-1.500 1.500-1.500h3q1 0 1.500 1l.5 .5h5.500q1.500 0 1.500 1.500v1" fill="#9ccc3a" stroke="#476a0e" stroke-width="1.300"/><path d="M1.500 12.500q-.8 0-.6-1l1-5.500q.2-1 1.200-1h11q1 0 .8 1l-.9 5.500q-.2 1-1.200 1z" fill="url(#gfo)" stroke="#476a0e" stroke-width="1.300"/></svg><div class="t" style="left:840px;top:216px;transform:scaleX(0.9032);transform-origin:0 50%;">サイト - 学校通信 (C:...</div>
<div class="t" style="left:1000px;top:216px;max-width:22px;overflow:hidden"><span style="display:inline-block;width:24.00px;vertical-align:top"><span style="display:inline-block;transform:scaleX(0.787);transform-origin:0 50%;letter-spacing:-1.83px">フォル</span></span></div>
<svg class="a" style="left:815px;top:237px" width="9" height="9"><rect x=".5" y=".5" width="8" height="8" fill="#fff" stroke="#808080"/><path d="M2 4.500h5" stroke="#000"/></svg><svg class="a" style="left:833px;top:232.5px" width="16" height="15"><path d="M1 11.500v-8.500q0-1.500 1.500-1.500h3q1 0 1.500 1l.5 .5h5.500q1.500 0 1.500 1.500v1" fill="#9ccc3a" stroke="#476a0e" stroke-width="1.300"/><path d="M1.500 12.500q-.8 0-.6-1l1-5.500q.2-1 1.200-1h11q1 0 .8 1l-.9 5.500q-.2 1-1.200 1z" fill="url(#gfo)" stroke="#476a0e" stroke-width="1.300"/></svg><div class="t" style="left:860px;top:234px;-webkit-text-stroke-width:0;transform:scaleX(0.9084);transform-origin:0 50%;">backnumber</div>
<div class="t" style="left:1000px;top:234px;max-width:22px;overflow:hidden"><span style="display:inline-block;width:24.00px;vertical-align:top"><span style="display:inline-block;transform:scaleX(0.787);transform-origin:0 50%;letter-spacing:-1.83px">フォル</span></span></div>
<svg class="a" style="left:853px;top:249px" width="16" height="18"><path d="M3.500 3.500h8l3 3v10.500h-11z" fill="#fafafa" stroke="#999"/><circle cx="9.500" cy="11" r="3.200" fill="none" stroke="#999"/><path d="M8.500 9.500l-1 1.500 1 1.500M10.500 9.500l1 1.500-1 1.500" stroke="#888" fill="none" stroke-width=".8"/><rect x="0" y="2" width="9" height="4" fill="#6f8f12" stroke="#4f6f08" stroke-width=".6"/></svg><div class="t" style="left:880px;top:252px;-webkit-text-stroke-width:0;transform:scaleX(0.9348);transform-origin:0 50%;">4gatsu.html</div>
<div class="t" style="left:975px;top:252px;-webkit-text-stroke-width:0;transform:scaleX(0.8815);transform-origin:0 50%;">1KB</div>
<div class="t" style="left:1000px;top:252px;-webkit-text-stroke-width:0;letter-spacing:0.00px;max-width:22px;overflow:hidden">HTM</div>
<svg class="a" style="left:853px;top:267px" width="16" height="18"><path d="M3.500 3.500h8l3 3v10.500h-11z" fill="#fafafa" stroke="#999"/><circle cx="9.500" cy="11" r="3.200" fill="none" stroke="#999"/><path d="M8.500 9.500l-1 1.500 1 1.500M10.500 9.500l1 1.500-1 1.500" stroke="#888" fill="none" stroke-width=".8"/><rect x="0" y="2" width="9" height="4" fill="#6f8f12" stroke="#4f6f08" stroke-width=".6"/></svg><div class="t" style="left:880px;top:270px;-webkit-text-stroke-width:0;transform:scaleX(0.9348);transform-origin:0 50%;">5gatsu.html</div>
<div class="t" style="left:975px;top:270px;-webkit-text-stroke-width:0;transform:scaleX(0.8815);transform-origin:0 50%;">1KB</div>
<div class="t" style="left:1000px;top:270px;-webkit-text-stroke-width:0;letter-spacing:0.00px;max-width:22px;overflow:hidden">HTM</div>
<svg class="a" style="left:853px;top:285px" width="16" height="18"><path d="M3.500 3.500h8l3 3v10.500h-11z" fill="#fafafa" stroke="#999"/><circle cx="9.500" cy="11" r="3.200" fill="none" stroke="#999"/><path d="M8.500 9.500l-1 1.500 1 1.500M10.500 9.500l1 1.500-1 1.500" stroke="#888" fill="none" stroke-width=".8"/><rect x="0" y="2" width="9" height="4" fill="#6f8f12" stroke="#4f6f08" stroke-width=".6"/></svg><div class="t" style="left:880px;top:288px;-webkit-text-stroke-width:0;transform:scaleX(0.9348);transform-origin:0 50%;">6gatsu.html</div>
<div class="t" style="left:975px;top:288px;-webkit-text-stroke-width:0;transform:scaleX(0.8815);transform-origin:0 50%;">1KB</div>
<div class="t" style="left:1000px;top:288px;-webkit-text-stroke-width:0;letter-spacing:0.00px;max-width:22px;overflow:hidden">HTM</div>
<svg class="a" style="left:853px;top:303px" width="16" height="18"><path d="M3.500 3.500h8l3 3v10.500h-11z" fill="#fafafa" stroke="#999"/><circle cx="9.500" cy="11" r="3.200" fill="none" stroke="#999"/><path d="M8.500 9.500l-1 1.500 1 1.500M10.500 9.500l1 1.500-1 1.500" stroke="#888" fill="none" stroke-width=".8"/><rect x="0" y="2" width="9" height="4" fill="#6f8f12" stroke="#4f6f08" stroke-width=".6"/></svg><div class="t" style="left:880px;top:306px;-webkit-text-stroke-width:0;transform:scaleX(0.9348);transform-origin:0 50%;">7gatsu.html</div>
<div class="t" style="left:975px;top:306px;-webkit-text-stroke-width:0;transform:scaleX(0.8815);transform-origin:0 50%;">1KB</div>
<div class="t" style="left:1000px;top:306px;-webkit-text-stroke-width:0;letter-spacing:0.00px;max-width:22px;overflow:hidden">HTM</div>
<svg class="a" style="left:815px;top:327px" width="9" height="9"><rect x=".5" y=".5" width="8" height="8" fill="#fff" stroke="#808080"/><path d="M2 4.500h5M4.500 2v5" stroke="#000"/></svg><svg class="a" style="left:833px;top:322.5px" width="16" height="15"><path d="M1 11.500v-8.500q0-1.500 1.500-1.500h3q1 0 1.500 1l.5 .5h5.500q1.500 0 1.500 1.500v1" fill="#9ccc3a" stroke="#476a0e" stroke-width="1.300"/><path d="M1.500 12.500q-.8 0-.6-1l1-5.500q.2-1 1.200-1h11q1 0 .8 1l-.9 5.500q-.2 1-1.200 1z" fill="url(#gfo)" stroke="#476a0e" stroke-width="1.300"/></svg><div class="t" style="left:860px;top:324px;-webkit-text-stroke-width:0;transform:scaleX(0.9178);transform-origin:0 50%;">image</div>
<div class="t" style="left:1000px;top:324px;max-width:22px;overflow:hidden"><span style="display:inline-block;width:24.00px;vertical-align:top"><span style="display:inline-block;transform:scaleX(0.787);transform-origin:0 50%;letter-spacing:-1.83px">フォル</span></span></div>
<svg class="a" style="left:833px;top:339px" width="16" height="18"><path d="M3.500 3.500h8l3 3v10.500h-11z" fill="#fafafa" stroke="#999"/><circle cx="9.500" cy="11" r="3.200" fill="none" stroke="#999"/><path d="M8.500 9.500l-1 1.500 1 1.500M10.500 9.500l1 1.500-1 1.500" stroke="#888" fill="none" stroke-width=".8"/><rect x="0" y="2" width="9" height="4" fill="#6f8f12" stroke="#4f6f08" stroke-width=".6"/></svg><div class="t" style="left:860px;top:342px;-webkit-text-stroke-width:0;transform:scaleX(0.9323);transform-origin:0 50%;">index.html</div>
<div class="t" style="left:975px;top:342px;-webkit-text-stroke-width:0;transform:scaleX(0.8815);transform-origin:0 50%;">6KB</div>
<div class="t" style="left:1000px;top:342px;-webkit-text-stroke-width:0;letter-spacing:0.00px;max-width:22px;overflow:hidden">HTM</div>
<svg class="a" style="left:833px;top:357px" width="16" height="18"><path d="M3.500 3.500h8l3 3v10.500h-11z" fill="#fafafa" stroke="#999"/><path d="M7 9h3v2h2v3H7z" fill="#9a9a9a"/><rect x="0" y="2" width="9" height="4" fill="#6f8f12" stroke="#4f6f08" stroke-width=".6"/></svg><div class="t" style="left:860px;top:360px;-webkit-text-stroke-width:0;transform:scaleX(0.9562);transform-origin:0 50%;">style.css</div>
<div class="t" style="left:975px;top:360px;-webkit-text-stroke-width:0;transform:scaleX(0.8815);transform-origin:0 50%;">1KB</div>
<div class="t" style="left:1000px;top:360px;-webkit-text-stroke-width:0;transform:scaleX(0.9509);transform-origin:0 50%;max-width:22px;overflow:hidden">Casc</div>
<div class="a" style="left:795px;top:695px;width:227px;height:17px;background:linear-gradient(to bottom,#f3f1ec,#fefefb)"></div><div class="a" style="left:794px;top:696px;width:16px;height:16px;border:1px solid #fff;border-radius:3px;background:linear-gradient(to bottom,#c9d7fb,#b8caf6);box-shadow:inset 0 0 0 1px #b4c6f2"><div class="a" style="left:6px;top:4px;width:6px;height:6px;border-right:2px solid #4d6185;border-bottom:2px solid #4d6185;transform:rotate(135deg)"></div></div><div class="a" style="left:1006px;top:696px;width:16px;height:16px;border:1px solid #fff;border-radius:3px;background:linear-gradient(to bottom,#c9d7fb,#b8caf6);box-shadow:inset 0 0 0 1px #b4c6f2"><div class="a" style="left:3px;top:4px;width:6px;height:6px;border-right:2px solid #4d6185;border-bottom:2px solid #4d6185;transform:rotate(-45deg)"></div></div><div class="a" style="left:811px;top:696px;width:46px;height:16px;border:1px solid #fff;border-radius:3px;background:linear-gradient(to bottom,#c9d7fb,#b8caf6);box-shadow:inset 0 0 0 1px #b4c6f2"></div><svg class="a" style="left:830px;top:700px" width="9" height="8"><path d="M.5 1v6M2.500 1v6M4.500 1v6M6.500 1v6" stroke="#eef3ff"/><path d="M1.500 2v6M3.500 2v6M5.500 2v6M7.500 2v6" stroke="#8ea5dc"/></svg><div class="a" style="left:793px;top:712px;width:231px;height:2px;background:linear-gradient(to bottom,#d8d4c2 50%,#fbfaf4 50%)"></div><svg class="a" style="left:794px;top:715px" width="18" height="18"><defs><radialGradient id="ggl" cx=".4" cy=".35" r=".7"><stop offset="0" stop-color="#b8e4fa"/><stop offset=".6" stop-color="#4a98e4"/><stop offset="1" stop-color="#2a5cb4"/></radialGradient></defs><circle cx="8" cy="8.500" r="7.300" fill="url(#ggl)" stroke="#4a6a9a" stroke-width=".8"/><path d="M3 6q2-4 6-3.500 1 2-1 3-1 2-3 2.500 0 3 1 5-3-2-3-7zM10 4q3 0 4 3-2 1-4-3z" fill="#3cb44a" opacity=".9"/><path d="M7 8.500l1.500-2.500 1.500 2.500h5.500v7.500h-8.500z" fill="#fafafa" stroke="#6a7a8a" stroke-width=".9"/><path d="M9 11.500h5M9 13.500h5" stroke="#6a7a8a" stroke-width="1.100"/></svg><div class="btnx" style="left:983px;top:719px;width:36px;height:14px;border-radius:3px"></div><div class="t" style="left:989px;top:720px;"><span style="display:inline-block;width:14.98px;vertical-align:top"><span style="display:inline-block;transform:scaleX(0.744);transform-origin:0 50%;letter-spacing:-1.93px">ログ</span></span>...</div>
<div class="a" style="left:792px;top:146px;width:1px;height:592px;background:#a8a494"></div><div class="a" style="left:792px;top:736px;width:232px;height:2px;background:linear-gradient(to bottom,#c5c1ab 50%,#f6f4ea 50%)"></div></body></html>
